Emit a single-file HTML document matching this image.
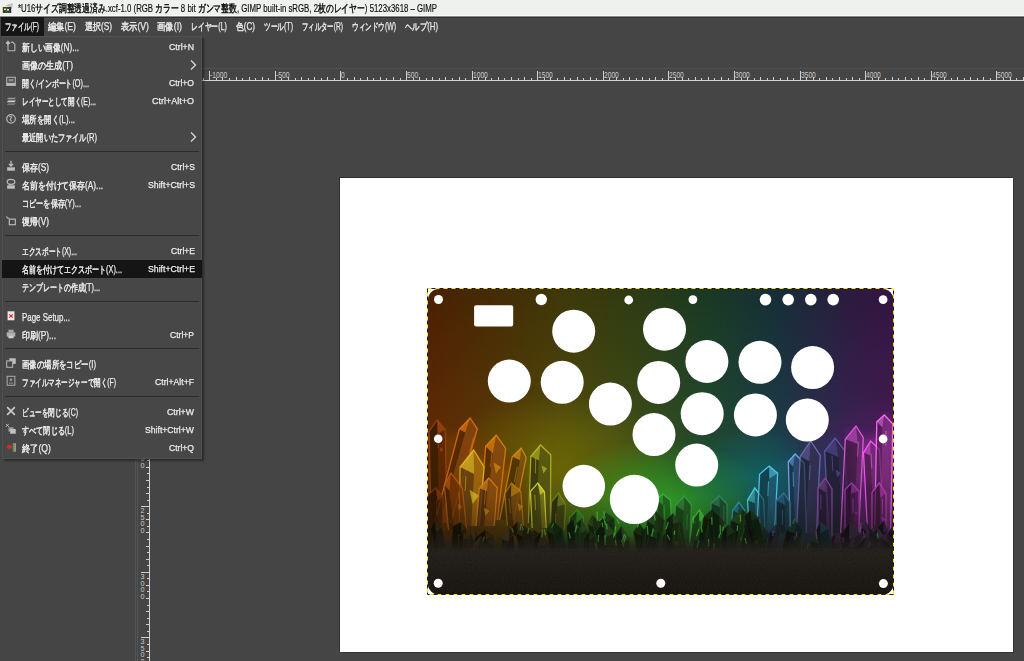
<!DOCTYPE html>
<html><head><meta charset="utf-8">
<style>
*{margin:0;padding:0;box-sizing:border-box}
html,body{width:1024px;height:661px;overflow:hidden;background:#454545;font-family:"Liberation Sans",sans-serif;position:relative}
.abs{position:absolute}
.f{position:absolute;display:inline-block;white-space:nowrap;transform-origin:0 50%}
#title{left:0;top:0;width:1024px;height:16px;background:#eef1ee;color:#111;font-size:11px;line-height:17px;-webkit-text-stroke:0.2px #111;border-bottom:1px solid #fafafa}
#menubar{left:0;top:17px;width:1024px;height:19px;background:#454545;color:#e8e8e8;font-size:9.5px;-webkit-text-stroke:0.25px #e8e8e8;line-height:19px}
#menubar .sel{background:#161616;left:1px;top:0;width:43px;height:19px}
#hruler{left:150px;top:68px;width:874px;height:13px;border-top:1px solid #505050}
#vruler{left:137px;top:81px;width:13px;height:580px;border-left:1px solid #545454}
#dockline{left:135px;top:36px;width:1px;height:625px;background:#535353}
#paper{left:340px;top:178px;width:673px;height:474px;background:#fff;box-shadow:-1px -1px 0 #2f2f2f, 1px 1px 0 #333}
#img{left:427px;top:288px;width:467px;height:307px}
#menu{left:2px;top:36px;width:200px;height:423px;background:#474747;color:#ececec;font-size:9.5px;-webkit-text-stroke:0.25px #ececec;box-shadow:inset 0 0 0 1px #505050, 2px 2px 2px rgba(0,0,0,0.4)}
.it{position:absolute;left:0;width:200px;height:18px;line-height:18px}
.it .f{top:0}
.it.hl{background:#151515}
.f i{font-style:normal;font-size:10.5px}
.f u{text-decoration:none;-webkit-text-stroke-width:0.45px}
.sep{position:absolute;left:3px;width:194px;height:1px;background:#2b2b2b}
.ic{position:absolute;left:4px;top:3px;width:12px;height:12px}
</style></head><body>
<div id="title" class="abs">
<svg class="abs" style="left:0;top:0" width="16" height="16"><defs><linearGradient id="tig" x1="0" x2="1"><stop offset="0" stop-color="#5a2a04"/><stop offset="0.5" stop-color="#2a6a20"/><stop offset="1" stop-color="#3a1a50"/></linearGradient></defs><path d="M5 6 L9 4 L13 3 L12 9 L9 7 Z" fill="#b8b8b8" opacity="0.8"/><rect x="2.8" y="7" width="8.4" height="6" fill="url(#tig)"/><rect x="4" y="8.5" width="2" height="1.5" fill="#ddd"/><rect x="7" y="9" width="2" height="1.5" fill="#eee"/></svg>
<span class="f" style="left:18px;top:0;--w:419">*U16<u>サイズ調整透過済み</u>.xcf-1.0 (RGB <u>カラー</u> 8 bit <u>ガンマ整数</u>, GIMP built-in sRGB, 2<u>枚のレイヤー</u>) 5123x3618 – GIMP</span></div>
<div id="menubar" class="abs">
<div class="abs sel"></div>
<span class="f" style="left:5px;--w:34"><u>ファイル</u><i>(F)</i></span>
<span class="f" style="left:48px;--w:28"><u>編集</u><i>(E)</i></span>
<span class="f" style="left:85px;--w:27"><u>選択</u><i>(S)</i></span>
<span class="f" style="left:121px;--w:28"><u>表示</u><i>(V)</i></span>
<span class="f" style="left:157px;--w:25"><u>画像</u><i>(I)</i></span>
<span class="f" style="left:191px;--w:36"><u>レイヤー</u><i>(L)</i></span>
<span class="f" style="left:236px;--w:19"><u>色</u><i>(C)</i></span>
<span class="f" style="left:264px;--w:29"><u>ツール</u><i>(T)</i></span>
<span class="f" style="left:302px;--w:41"><u>フィルター</u><i>(R)</i></span>
<span class="f" style="left:352px;--w:44"><u>ウィンドウ</u><i>(W)</i></span>
<span class="f" style="left:405px;--w:33"><u>ヘルプ</u><i>(H)</i></span>
</div>
<div class="abs" style="left:0;top:16px;width:1024px;height:1px;background:#8c8c8c"></div>
<div class="abs" style="left:44px;top:17px;width:980px;height:1px;background:#2e2e2e"></div>
<div class="abs" style="left:44px;top:18px;width:980px;height:1px;background:#4a4a4a"></div>
<div id="hruler" class="abs"><svg width="874" height="13" style="position:absolute;left:0;top:0">
<rect x="0" y="11" width="874" height="1" fill="#d4d4d4"/>
<rect x="0" y="9" width="1" height="2" fill="#cfcfcf"/>
<rect x="7" y="8" width="1" height="3" fill="#cfcfcf"/>
<rect x="13" y="9" width="1" height="2" fill="#cfcfcf"/>
<rect x="20" y="8" width="1" height="3" fill="#cfcfcf"/>
<rect x="26" y="9" width="1" height="2" fill="#cfcfcf"/>
<rect x="33" y="8" width="1" height="3" fill="#cfcfcf"/>
<rect x="40" y="9" width="1" height="2" fill="#cfcfcf"/>
<rect x="46" y="8" width="1" height="3" fill="#cfcfcf"/>
<rect x="53" y="9" width="1" height="2" fill="#cfcfcf"/>
<rect x="59" y="2" width="1" height="9" fill="#cfcfcf"/>
<text x="60" y="8.6" font-size="8.2" fill="#cccccc" font-family="Liberation Sans" textLength="17.3" lengthAdjust="spacingAndGlyphs">-1000</text>
<rect x="66" y="9" width="1" height="2" fill="#cfcfcf"/>
<rect x="72" y="8" width="1" height="3" fill="#cfcfcf"/>
<rect x="79" y="9" width="1" height="2" fill="#cfcfcf"/>
<rect x="86" y="8" width="1" height="3" fill="#cfcfcf"/>
<rect x="92" y="9" width="1" height="2" fill="#cfcfcf"/>
<rect x="99" y="8" width="1" height="3" fill="#cfcfcf"/>
<rect x="105" y="9" width="1" height="2" fill="#cfcfcf"/>
<rect x="112" y="8" width="1" height="3" fill="#cfcfcf"/>
<rect x="118" y="9" width="1" height="2" fill="#cfcfcf"/>
<rect x="125" y="2" width="1" height="9" fill="#cfcfcf"/>
<text x="126" y="8.6" font-size="8.2" fill="#cccccc" font-family="Liberation Sans" textLength="13.6" lengthAdjust="spacingAndGlyphs">-500</text>
<rect x="131" y="9" width="1" height="2" fill="#cfcfcf"/>
<rect x="138" y="8" width="1" height="3" fill="#cfcfcf"/>
<rect x="145" y="9" width="1" height="2" fill="#cfcfcf"/>
<rect x="151" y="8" width="1" height="3" fill="#cfcfcf"/>
<rect x="158" y="9" width="1" height="2" fill="#cfcfcf"/>
<rect x="164" y="8" width="1" height="3" fill="#cfcfcf"/>
<rect x="171" y="9" width="1" height="2" fill="#cfcfcf"/>
<rect x="177" y="8" width="1" height="3" fill="#cfcfcf"/>
<rect x="184" y="9" width="1" height="2" fill="#cfcfcf"/>
<rect x="190" y="2" width="1" height="9" fill="#cfcfcf"/>
<text x="191" y="8.6" font-size="8.2" fill="#cccccc" font-family="Liberation Sans" textLength="3.7" lengthAdjust="spacingAndGlyphs">0</text>
<rect x="197" y="9" width="1" height="2" fill="#cfcfcf"/>
<rect x="204" y="8" width="1" height="3" fill="#cfcfcf"/>
<rect x="210" y="9" width="1" height="2" fill="#cfcfcf"/>
<rect x="217" y="8" width="1" height="3" fill="#cfcfcf"/>
<rect x="223" y="9" width="1" height="2" fill="#cfcfcf"/>
<rect x="230" y="8" width="1" height="3" fill="#cfcfcf"/>
<rect x="236" y="9" width="1" height="2" fill="#cfcfcf"/>
<rect x="243" y="8" width="1" height="3" fill="#cfcfcf"/>
<rect x="250" y="9" width="1" height="2" fill="#cfcfcf"/>
<rect x="256" y="2" width="1" height="9" fill="#cfcfcf"/>
<text x="257" y="8.6" font-size="8.2" fill="#cccccc" font-family="Liberation Sans" textLength="11.1" lengthAdjust="spacingAndGlyphs">500</text>
<rect x="263" y="9" width="1" height="2" fill="#cfcfcf"/>
<rect x="269" y="8" width="1" height="3" fill="#cfcfcf"/>
<rect x="276" y="9" width="1" height="2" fill="#cfcfcf"/>
<rect x="282" y="8" width="1" height="3" fill="#cfcfcf"/>
<rect x="289" y="9" width="1" height="2" fill="#cfcfcf"/>
<rect x="295" y="8" width="1" height="3" fill="#cfcfcf"/>
<rect x="302" y="9" width="1" height="2" fill="#cfcfcf"/>
<rect x="309" y="8" width="1" height="3" fill="#cfcfcf"/>
<rect x="315" y="9" width="1" height="2" fill="#cfcfcf"/>
<rect x="322" y="2" width="1" height="9" fill="#cfcfcf"/>
<text x="323" y="8.6" font-size="8.2" fill="#cccccc" font-family="Liberation Sans" textLength="14.8" lengthAdjust="spacingAndGlyphs">1000</text>
<rect x="328" y="9" width="1" height="2" fill="#cfcfcf"/>
<rect x="335" y="8" width="1" height="3" fill="#cfcfcf"/>
<rect x="341" y="9" width="1" height="2" fill="#cfcfcf"/>
<rect x="348" y="8" width="1" height="3" fill="#cfcfcf"/>
<rect x="354" y="9" width="1" height="2" fill="#cfcfcf"/>
<rect x="361" y="8" width="1" height="3" fill="#cfcfcf"/>
<rect x="368" y="9" width="1" height="2" fill="#cfcfcf"/>
<rect x="374" y="8" width="1" height="3" fill="#cfcfcf"/>
<rect x="381" y="9" width="1" height="2" fill="#cfcfcf"/>
<rect x="387" y="2" width="1" height="9" fill="#cfcfcf"/>
<text x="388" y="8.6" font-size="8.2" fill="#cccccc" font-family="Liberation Sans" textLength="14.8" lengthAdjust="spacingAndGlyphs">1500</text>
<rect x="394" y="9" width="1" height="2" fill="#cfcfcf"/>
<rect x="400" y="8" width="1" height="3" fill="#cfcfcf"/>
<rect x="407" y="9" width="1" height="2" fill="#cfcfcf"/>
<rect x="414" y="8" width="1" height="3" fill="#cfcfcf"/>
<rect x="420" y="9" width="1" height="2" fill="#cfcfcf"/>
<rect x="427" y="8" width="1" height="3" fill="#cfcfcf"/>
<rect x="433" y="9" width="1" height="2" fill="#cfcfcf"/>
<rect x="440" y="8" width="1" height="3" fill="#cfcfcf"/>
<rect x="446" y="9" width="1" height="2" fill="#cfcfcf"/>
<rect x="453" y="2" width="1" height="9" fill="#cfcfcf"/>
<text x="454" y="8.6" font-size="8.2" fill="#cccccc" font-family="Liberation Sans" textLength="14.8" lengthAdjust="spacingAndGlyphs">2000</text>
<rect x="459" y="9" width="1" height="2" fill="#cfcfcf"/>
<rect x="466" y="8" width="1" height="3" fill="#cfcfcf"/>
<rect x="473" y="9" width="1" height="2" fill="#cfcfcf"/>
<rect x="479" y="8" width="1" height="3" fill="#cfcfcf"/>
<rect x="486" y="9" width="1" height="2" fill="#cfcfcf"/>
<rect x="492" y="8" width="1" height="3" fill="#cfcfcf"/>
<rect x="499" y="9" width="1" height="2" fill="#cfcfcf"/>
<rect x="505" y="8" width="1" height="3" fill="#cfcfcf"/>
<rect x="512" y="9" width="1" height="2" fill="#cfcfcf"/>
<rect x="518" y="2" width="1" height="9" fill="#cfcfcf"/>
<text x="519" y="8.6" font-size="8.2" fill="#cccccc" font-family="Liberation Sans" textLength="14.8" lengthAdjust="spacingAndGlyphs">2500</text>
<rect x="525" y="9" width="1" height="2" fill="#cfcfcf"/>
<rect x="532" y="8" width="1" height="3" fill="#cfcfcf"/>
<rect x="538" y="9" width="1" height="2" fill="#cfcfcf"/>
<rect x="545" y="8" width="1" height="3" fill="#cfcfcf"/>
<rect x="551" y="9" width="1" height="2" fill="#cfcfcf"/>
<rect x="558" y="8" width="1" height="3" fill="#cfcfcf"/>
<rect x="564" y="9" width="1" height="2" fill="#cfcfcf"/>
<rect x="571" y="8" width="1" height="3" fill="#cfcfcf"/>
<rect x="578" y="9" width="1" height="2" fill="#cfcfcf"/>
<rect x="584" y="2" width="1" height="9" fill="#cfcfcf"/>
<text x="585" y="8.6" font-size="8.2" fill="#cccccc" font-family="Liberation Sans" textLength="14.8" lengthAdjust="spacingAndGlyphs">3000</text>
<rect x="591" y="9" width="1" height="2" fill="#cfcfcf"/>
<rect x="597" y="8" width="1" height="3" fill="#cfcfcf"/>
<rect x="604" y="9" width="1" height="2" fill="#cfcfcf"/>
<rect x="610" y="8" width="1" height="3" fill="#cfcfcf"/>
<rect x="617" y="9" width="1" height="2" fill="#cfcfcf"/>
<rect x="623" y="8" width="1" height="3" fill="#cfcfcf"/>
<rect x="630" y="9" width="1" height="2" fill="#cfcfcf"/>
<rect x="637" y="8" width="1" height="3" fill="#cfcfcf"/>
<rect x="643" y="9" width="1" height="2" fill="#cfcfcf"/>
<rect x="650" y="2" width="1" height="9" fill="#cfcfcf"/>
<text x="651" y="8.6" font-size="8.2" fill="#cccccc" font-family="Liberation Sans" textLength="14.8" lengthAdjust="spacingAndGlyphs">3500</text>
<rect x="656" y="9" width="1" height="2" fill="#cfcfcf"/>
<rect x="663" y="8" width="1" height="3" fill="#cfcfcf"/>
<rect x="669" y="9" width="1" height="2" fill="#cfcfcf"/>
<rect x="676" y="8" width="1" height="3" fill="#cfcfcf"/>
<rect x="682" y="9" width="1" height="2" fill="#cfcfcf"/>
<rect x="689" y="8" width="1" height="3" fill="#cfcfcf"/>
<rect x="696" y="9" width="1" height="2" fill="#cfcfcf"/>
<rect x="702" y="8" width="1" height="3" fill="#cfcfcf"/>
<rect x="709" y="9" width="1" height="2" fill="#cfcfcf"/>
<rect x="715" y="2" width="1" height="9" fill="#cfcfcf"/>
<text x="716" y="8.6" font-size="8.2" fill="#cccccc" font-family="Liberation Sans" textLength="14.8" lengthAdjust="spacingAndGlyphs">4000</text>
<rect x="722" y="9" width="1" height="2" fill="#cfcfcf"/>
<rect x="728" y="8" width="1" height="3" fill="#cfcfcf"/>
<rect x="735" y="9" width="1" height="2" fill="#cfcfcf"/>
<rect x="742" y="8" width="1" height="3" fill="#cfcfcf"/>
<rect x="748" y="9" width="1" height="2" fill="#cfcfcf"/>
<rect x="755" y="8" width="1" height="3" fill="#cfcfcf"/>
<rect x="761" y="9" width="1" height="2" fill="#cfcfcf"/>
<rect x="768" y="8" width="1" height="3" fill="#cfcfcf"/>
<rect x="774" y="9" width="1" height="2" fill="#cfcfcf"/>
<rect x="781" y="2" width="1" height="9" fill="#cfcfcf"/>
<text x="782" y="8.6" font-size="8.2" fill="#cccccc" font-family="Liberation Sans" textLength="14.8" lengthAdjust="spacingAndGlyphs">4500</text>
<rect x="787" y="9" width="1" height="2" fill="#cfcfcf"/>
<rect x="794" y="8" width="1" height="3" fill="#cfcfcf"/>
<rect x="801" y="9" width="1" height="2" fill="#cfcfcf"/>
<rect x="807" y="8" width="1" height="3" fill="#cfcfcf"/>
<rect x="814" y="9" width="1" height="2" fill="#cfcfcf"/>
<rect x="820" y="8" width="1" height="3" fill="#cfcfcf"/>
<rect x="827" y="9" width="1" height="2" fill="#cfcfcf"/>
<rect x="833" y="8" width="1" height="3" fill="#cfcfcf"/>
<rect x="840" y="9" width="1" height="2" fill="#cfcfcf"/>
<rect x="846" y="2" width="1" height="9" fill="#cfcfcf"/>
<text x="847" y="8.6" font-size="8.2" fill="#cccccc" font-family="Liberation Sans" textLength="14.8" lengthAdjust="spacingAndGlyphs">5000</text>
<rect x="853" y="9" width="1" height="2" fill="#cfcfcf"/>
<rect x="860" y="8" width="1" height="3" fill="#cfcfcf"/>
<rect x="866" y="9" width="1" height="2" fill="#cfcfcf"/>
<rect x="873" y="8" width="1" height="3" fill="#cfcfcf"/>
</svg></div>
<div id="dockline" class="abs"></div>
<div id="vruler" class="abs"><svg width="13" height="580" style="position:absolute;left:0;top:0">
<rect x="11" y="0" width="1" height="580" fill="#d4d4d4"/>
<rect x="8" y="5" width="3" height="1" fill="#cfcfcf"/>
<rect x="9" y="12" width="2" height="1" fill="#cfcfcf"/>
<rect x="8" y="18" width="3" height="1" fill="#cfcfcf"/>
<rect x="9" y="25" width="2" height="1" fill="#cfcfcf"/>
<rect x="3" y="32" width="8" height="1" fill="#cfcfcf"/>
<text x="2.6" y="39.0" font-size="8" fill="#cccccc" font-family="Liberation Sans" textLength="4" lengthAdjust="spacingAndGlyphs">-</text>
<text x="2.6" y="45.5" font-size="8" fill="#cccccc" font-family="Liberation Sans" textLength="4" lengthAdjust="spacingAndGlyphs">5</text>
<text x="2.6" y="52.0" font-size="8" fill="#cccccc" font-family="Liberation Sans" textLength="4" lengthAdjust="spacingAndGlyphs">0</text>
<text x="2.6" y="58.5" font-size="8" fill="#cccccc" font-family="Liberation Sans" textLength="4" lengthAdjust="spacingAndGlyphs">0</text>
<rect x="9" y="38" width="2" height="1" fill="#cfcfcf"/>
<rect x="8" y="45" width="3" height="1" fill="#cfcfcf"/>
<rect x="9" y="51" width="2" height="1" fill="#cfcfcf"/>
<rect x="8" y="58" width="3" height="1" fill="#cfcfcf"/>
<rect x="9" y="64" width="2" height="1" fill="#cfcfcf"/>
<rect x="8" y="71" width="3" height="1" fill="#cfcfcf"/>
<rect x="9" y="78" width="2" height="1" fill="#cfcfcf"/>
<rect x="8" y="84" width="3" height="1" fill="#cfcfcf"/>
<rect x="9" y="91" width="2" height="1" fill="#cfcfcf"/>
<rect x="3" y="97" width="8" height="1" fill="#cfcfcf"/>
<text x="2.6" y="104.0" font-size="8" fill="#cccccc" font-family="Liberation Sans" textLength="4" lengthAdjust="spacingAndGlyphs">0</text>
<rect x="9" y="104" width="2" height="1" fill="#cfcfcf"/>
<rect x="8" y="110" width="3" height="1" fill="#cfcfcf"/>
<rect x="9" y="117" width="2" height="1" fill="#cfcfcf"/>
<rect x="8" y="123" width="3" height="1" fill="#cfcfcf"/>
<rect x="9" y="130" width="2" height="1" fill="#cfcfcf"/>
<rect x="8" y="137" width="3" height="1" fill="#cfcfcf"/>
<rect x="9" y="143" width="2" height="1" fill="#cfcfcf"/>
<rect x="8" y="150" width="3" height="1" fill="#cfcfcf"/>
<rect x="9" y="156" width="2" height="1" fill="#cfcfcf"/>
<rect x="3" y="163" width="8" height="1" fill="#cfcfcf"/>
<text x="2.6" y="170.0" font-size="8" fill="#cccccc" font-family="Liberation Sans" textLength="4" lengthAdjust="spacingAndGlyphs">5</text>
<text x="2.6" y="176.5" font-size="8" fill="#cccccc" font-family="Liberation Sans" textLength="4" lengthAdjust="spacingAndGlyphs">0</text>
<text x="2.6" y="183.0" font-size="8" fill="#cccccc" font-family="Liberation Sans" textLength="4" lengthAdjust="spacingAndGlyphs">0</text>
<rect x="9" y="169" width="2" height="1" fill="#cfcfcf"/>
<rect x="8" y="176" width="3" height="1" fill="#cfcfcf"/>
<rect x="9" y="182" width="2" height="1" fill="#cfcfcf"/>
<rect x="8" y="189" width="3" height="1" fill="#cfcfcf"/>
<rect x="9" y="196" width="2" height="1" fill="#cfcfcf"/>
<rect x="8" y="202" width="3" height="1" fill="#cfcfcf"/>
<rect x="9" y="209" width="2" height="1" fill="#cfcfcf"/>
<rect x="8" y="215" width="3" height="1" fill="#cfcfcf"/>
<rect x="9" y="222" width="2" height="1" fill="#cfcfcf"/>
<rect x="3" y="228" width="8" height="1" fill="#cfcfcf"/>
<text x="2.6" y="235.0" font-size="8" fill="#cccccc" font-family="Liberation Sans" textLength="4" lengthAdjust="spacingAndGlyphs">1</text>
<text x="2.6" y="241.5" font-size="8" fill="#cccccc" font-family="Liberation Sans" textLength="4" lengthAdjust="spacingAndGlyphs">0</text>
<text x="2.6" y="248.0" font-size="8" fill="#cccccc" font-family="Liberation Sans" textLength="4" lengthAdjust="spacingAndGlyphs">0</text>
<text x="2.6" y="254.5" font-size="8" fill="#cccccc" font-family="Liberation Sans" textLength="4" lengthAdjust="spacingAndGlyphs">0</text>
<rect x="9" y="235" width="2" height="1" fill="#cfcfcf"/>
<rect x="8" y="242" width="3" height="1" fill="#cfcfcf"/>
<rect x="9" y="248" width="2" height="1" fill="#cfcfcf"/>
<rect x="8" y="255" width="3" height="1" fill="#cfcfcf"/>
<rect x="9" y="261" width="2" height="1" fill="#cfcfcf"/>
<rect x="8" y="268" width="3" height="1" fill="#cfcfcf"/>
<rect x="9" y="274" width="2" height="1" fill="#cfcfcf"/>
<rect x="8" y="281" width="3" height="1" fill="#cfcfcf"/>
<rect x="9" y="287" width="2" height="1" fill="#cfcfcf"/>
<rect x="3" y="294" width="8" height="1" fill="#cfcfcf"/>
<text x="2.6" y="301.0" font-size="8" fill="#cccccc" font-family="Liberation Sans" textLength="4" lengthAdjust="spacingAndGlyphs">1</text>
<text x="2.6" y="307.5" font-size="8" fill="#cccccc" font-family="Liberation Sans" textLength="4" lengthAdjust="spacingAndGlyphs">5</text>
<text x="2.6" y="314.0" font-size="8" fill="#cccccc" font-family="Liberation Sans" textLength="4" lengthAdjust="spacingAndGlyphs">0</text>
<text x="2.6" y="320.5" font-size="8" fill="#cccccc" font-family="Liberation Sans" textLength="4" lengthAdjust="spacingAndGlyphs">0</text>
<rect x="9" y="301" width="2" height="1" fill="#cfcfcf"/>
<rect x="8" y="307" width="3" height="1" fill="#cfcfcf"/>
<rect x="9" y="314" width="2" height="1" fill="#cfcfcf"/>
<rect x="8" y="320" width="3" height="1" fill="#cfcfcf"/>
<rect x="9" y="327" width="2" height="1" fill="#cfcfcf"/>
<rect x="8" y="333" width="3" height="1" fill="#cfcfcf"/>
<rect x="9" y="340" width="2" height="1" fill="#cfcfcf"/>
<rect x="8" y="346" width="3" height="1" fill="#cfcfcf"/>
<rect x="9" y="353" width="2" height="1" fill="#cfcfcf"/>
<rect x="3" y="360" width="8" height="1" fill="#cfcfcf"/>
<text x="2.6" y="367.0" font-size="8" fill="#cccccc" font-family="Liberation Sans" textLength="4" lengthAdjust="spacingAndGlyphs">2</text>
<text x="2.6" y="373.5" font-size="8" fill="#cccccc" font-family="Liberation Sans" textLength="4" lengthAdjust="spacingAndGlyphs">0</text>
<text x="2.6" y="380.0" font-size="8" fill="#cccccc" font-family="Liberation Sans" textLength="4" lengthAdjust="spacingAndGlyphs">0</text>
<text x="2.6" y="386.5" font-size="8" fill="#cccccc" font-family="Liberation Sans" textLength="4" lengthAdjust="spacingAndGlyphs">0</text>
<rect x="9" y="366" width="2" height="1" fill="#cfcfcf"/>
<rect x="8" y="373" width="3" height="1" fill="#cfcfcf"/>
<rect x="9" y="379" width="2" height="1" fill="#cfcfcf"/>
<rect x="8" y="386" width="3" height="1" fill="#cfcfcf"/>
<rect x="9" y="392" width="2" height="1" fill="#cfcfcf"/>
<rect x="8" y="399" width="3" height="1" fill="#cfcfcf"/>
<rect x="9" y="406" width="2" height="1" fill="#cfcfcf"/>
<rect x="8" y="412" width="3" height="1" fill="#cfcfcf"/>
<rect x="9" y="419" width="2" height="1" fill="#cfcfcf"/>
<rect x="3" y="425" width="8" height="1" fill="#cfcfcf"/>
<text x="2.6" y="432.0" font-size="8" fill="#cccccc" font-family="Liberation Sans" textLength="4" lengthAdjust="spacingAndGlyphs">2</text>
<text x="2.6" y="438.5" font-size="8" fill="#cccccc" font-family="Liberation Sans" textLength="4" lengthAdjust="spacingAndGlyphs">5</text>
<text x="2.6" y="445.0" font-size="8" fill="#cccccc" font-family="Liberation Sans" textLength="4" lengthAdjust="spacingAndGlyphs">0</text>
<text x="2.6" y="451.5" font-size="8" fill="#cccccc" font-family="Liberation Sans" textLength="4" lengthAdjust="spacingAndGlyphs">0</text>
<rect x="9" y="432" width="2" height="1" fill="#cfcfcf"/>
<rect x="8" y="438" width="3" height="1" fill="#cfcfcf"/>
<rect x="9" y="445" width="2" height="1" fill="#cfcfcf"/>
<rect x="8" y="451" width="3" height="1" fill="#cfcfcf"/>
<rect x="9" y="458" width="2" height="1" fill="#cfcfcf"/>
<rect x="8" y="465" width="3" height="1" fill="#cfcfcf"/>
<rect x="9" y="471" width="2" height="1" fill="#cfcfcf"/>
<rect x="8" y="478" width="3" height="1" fill="#cfcfcf"/>
<rect x="9" y="484" width="2" height="1" fill="#cfcfcf"/>
<rect x="3" y="491" width="8" height="1" fill="#cfcfcf"/>
<text x="2.6" y="498.0" font-size="8" fill="#cccccc" font-family="Liberation Sans" textLength="4" lengthAdjust="spacingAndGlyphs">3</text>
<text x="2.6" y="504.5" font-size="8" fill="#cccccc" font-family="Liberation Sans" textLength="4" lengthAdjust="spacingAndGlyphs">0</text>
<text x="2.6" y="511.0" font-size="8" fill="#cccccc" font-family="Liberation Sans" textLength="4" lengthAdjust="spacingAndGlyphs">0</text>
<text x="2.6" y="517.5" font-size="8" fill="#cccccc" font-family="Liberation Sans" textLength="4" lengthAdjust="spacingAndGlyphs">0</text>
<rect x="9" y="497" width="2" height="1" fill="#cfcfcf"/>
<rect x="8" y="504" width="3" height="1" fill="#cfcfcf"/>
<rect x="9" y="510" width="2" height="1" fill="#cfcfcf"/>
<rect x="8" y="517" width="3" height="1" fill="#cfcfcf"/>
<rect x="9" y="524" width="2" height="1" fill="#cfcfcf"/>
<rect x="8" y="530" width="3" height="1" fill="#cfcfcf"/>
<rect x="9" y="537" width="2" height="1" fill="#cfcfcf"/>
<rect x="8" y="543" width="3" height="1" fill="#cfcfcf"/>
<rect x="9" y="550" width="2" height="1" fill="#cfcfcf"/>
<rect x="3" y="556" width="8" height="1" fill="#cfcfcf"/>
<text x="2.6" y="563.0" font-size="8" fill="#cccccc" font-family="Liberation Sans" textLength="4" lengthAdjust="spacingAndGlyphs">3</text>
<text x="2.6" y="569.5" font-size="8" fill="#cccccc" font-family="Liberation Sans" textLength="4" lengthAdjust="spacingAndGlyphs">5</text>
<text x="2.6" y="576.0" font-size="8" fill="#cccccc" font-family="Liberation Sans" textLength="4" lengthAdjust="spacingAndGlyphs">0</text>
<text x="2.6" y="582.5" font-size="8" fill="#cccccc" font-family="Liberation Sans" textLength="4" lengthAdjust="spacingAndGlyphs">0</text>
<rect x="9" y="563" width="2" height="1" fill="#cfcfcf"/>
<rect x="8" y="570" width="3" height="1" fill="#cfcfcf"/>
<rect x="9" y="576" width="2" height="1" fill="#cfcfcf"/>
</svg></div>
<div id="paper" class="abs"></div>
<svg id="img" class="abs" width="467" height="307" viewBox="0 0 467 307">
<defs>
<linearGradient id="bg" x1="0" y1="0" x2="1" y2="0">
<stop offset="0" stop-color="#5e2804"/>
<stop offset="0.15" stop-color="#563806"/>
<stop offset="0.3" stop-color="#4e480c"/>
<stop offset="0.45" stop-color="#3a4a18"/>
<stop offset="0.6" stop-color="#20482c"/>
<stop offset="0.75" stop-color="#1c3a46"/>
<stop offset="0.9" stop-color="#36224e"/>
<stop offset="1" stop-color="#421a50"/>
</linearGradient>
<linearGradient id="topdark" x1="0" y1="0" x2="0" y2="1">
<stop offset="0" stop-color="#000" stop-opacity="0.22"/>
<stop offset="0.45" stop-color="#000" stop-opacity="0"/>
</linearGradient>
<radialGradient id="g1" cx="0.28" cy="0.6" r="0.26">
<stop offset="0" stop-color="#8a8a00" stop-opacity="0.55"/>
<stop offset="1" stop-color="#8a8a00" stop-opacity="0"/>
</radialGradient>
<radialGradient id="g2" cx="0.5" cy="0.74" r="0.25">
<stop offset="0" stop-color="#38d030" stop-opacity="0.95"/>
<stop offset="0.5" stop-color="#30c028" stop-opacity="0.5"/>
<stop offset="1" stop-color="#30b828" stop-opacity="0"/>
</radialGradient>
<radialGradient id="g3" cx="0.71" cy="0.62" r="0.17">
<stop offset="0" stop-color="#089090" stop-opacity="0.5"/>
<stop offset="1" stop-color="#089090" stop-opacity="0"/>
</radialGradient>
<radialGradient id="g4" cx="1.0" cy="0.55" r="0.2">
<stop offset="0" stop-color="#a020a0" stop-opacity="0.2"/>
<stop offset="1" stop-color="#a020a0" stop-opacity="0"/>
</radialGradient>
<linearGradient id="ground" x1="0" y1="0" x2="0" y2="1">
<stop offset="0" stop-color="#211f19" stop-opacity="0"/>
<stop offset="0.28" stop-color="#221f1a" stop-opacity="1"/>
<stop offset="1" stop-color="#17130f"/>
</linearGradient>
<linearGradient id="lowdark" x1="0" y1="0" x2="0" y2="1">
<stop offset="0" stop-color="#15150f" stop-opacity="0"/>
<stop offset="0.5" stop-color="#15150f" stop-opacity="0.15"/>
<stop offset="1" stop-color="#15150f" stop-opacity="0.7"/>
</linearGradient>
<filter id="blur3" x="-20%" y="-20%" width="140%" height="140%"><feGaussianBlur stdDeviation="4"/></filter>
<filter id="noise" x="0" y="0" width="100%" height="100%"><feTurbulence type="fractalNoise" baseFrequency="0.9" numOctaves="1" seed="4"/><feColorMatrix type="matrix" values="0 0 0 0 0.2  0 0 0 0 0.19  0 0 0 0 0.16  0 0 0 -1.6 1.1"/></filter>
<filter id="soft" x="-5%" y="-5%" width="110%" height="110%"><feGaussianBlur stdDeviation="0.6"/></filter><filter id="soft2" x="-5%" y="-5%" width="110%" height="110%"><feGaussianBlur stdDeviation="0.6"/></filter>
<clipPath id="clip"><rect x="1" y="1" width="465.5" height="305.5" rx="11"/></clipPath>
</defs>
<g clip-path="url(#clip)">
<rect width="467" height="307" fill="url(#bg)"/>
<rect width="467" height="307" fill="url(#topdark)"/>
<rect width="467" height="307" fill="url(#g1)"/>
<rect width="467" height="307" fill="url(#g2)"/>
<rect width="467" height="307" fill="url(#g3)"/>
<rect width="467" height="307" fill="url(#g4)"/>
<polygon points="0.0,150.0 20.0,145.0 45.0,150.0 70.0,162.0 95.0,172.0 100.0,230.0 0.0,240.0" fill="#7a3a08" fill-opacity="0.65" filter="url(#blur3)"/>
<polygon points="35.0,172.0 60.0,172.0 85.0,185.0 80.0,210.0 40.0,215.0" fill="#b86810" fill-opacity="0.40" filter="url(#blur3)"/>
<polygon points="105.0,160.0 120.0,155.0 130.0,200.0 132.0,230.0 100.0,230.0" fill="#6a6a14" fill-opacity="0.50" filter="url(#blur3)"/>
<polygon points="320.0,200.0 345.0,178.0 372.0,165.0 380.0,235.0 320.0,235.0" fill="#1a5a70" fill-opacity="0.45" filter="url(#blur3)"/>
<polygon points="378.0,152.0 410.0,148.0 420.0,238.0 375.0,238.0" fill="#303060" fill-opacity="0.50" filter="url(#blur3)"/>
<polygon points="420.0,138.0 445.0,150.0 458.0,125.0 466.0,125.0 466.0,250.0 420.0,250.0" fill="#6a2070" fill-opacity="0.60" filter="url(#blur3)"/>
<polygon points="428.0,155.0 452.0,150.0 466.0,130.0 466.0,195.0 430.0,195.0" fill="#a030a0" fill-opacity="0.45" filter="url(#blur3)"/>
<g filter="url(#soft)">
<polygon points="10.1,132.0 2.2,143.4 4.2,240.0 12.5,240.0 10.6,145.7" fill="#361704" fill-opacity="0.80"/>
<polygon points="10.1,132.0 10.6,145.7 12.5,240.0 20.2,240.0 18.2,141.6" fill="#5a2706" fill-opacity="0.80"/>
<polygon points="10.1,132.0 10.6,145.7 18.2,141.6" fill="#a9490c" fill-opacity="0.64"/>
<polyline points="4.2,240.0 2.2,143.4 10.1,132.0 18.2,141.6 20.2,240.0" fill="none" stroke="#a9490c" stroke-width="1.3" stroke-opacity="0.70"/>
<line x1="11.0" y1="145.2" x2="11.3" y2="160.2" stroke="#ba500e" stroke-width="1" stroke-opacity="0.42"/>
<polygon points="12.9,159.3 16.4,161.4 13.9,164.6" fill="#c3540e" fill-opacity="0.56"/>
<polygon points="43.1,130.0 32.3,141.3 7.6,235.0 12.7,235.0 38.3,144.5" fill="#512806" fill-opacity="0.80"/>
<polygon points="43.1,130.0 38.3,144.5 12.7,235.0 23.6,235.0 50.3,140.8" fill="#88440a" fill-opacity="0.80"/>
<polygon points="43.1,130.0 32.3,141.3 38.3,144.5" fill="#ff8013" fill-opacity="0.64"/>
<polyline points="7.6,235.0 32.3,141.3 43.1,130.0 50.3,140.8 23.6,235.0" fill="none" stroke="#ff8013" stroke-width="1.3" stroke-opacity="0.70"/>
<line x1="46.5" y1="149.7" x2="42.5" y2="164.7" stroke="#ff8c15" stroke-width="1" stroke-opacity="0.42"/>
<polygon points="69.2,147.0 58.7,158.4 52.5,232.0 58.8,232.0 65.9,165.3" fill="#552d07" fill-opacity="0.80"/>
<polygon points="69.2,147.0 65.9,165.3 58.8,232.0 70.5,232.0 78.7,160.4" fill="#8e4c0b" fill-opacity="0.80"/>
<polygon points="69.2,147.0 58.7,158.4 65.9,165.3" fill="#ff9016" fill-opacity="0.64"/>
<polyline points="52.5,232.0 58.7,158.4 69.2,147.0 78.7,160.4 70.5,232.0" fill="none" stroke="#ff9016" stroke-width="1.3" stroke-opacity="0.70"/>
<line x1="65.0" y1="164.2" x2="63.5" y2="179.2" stroke="#ff9e18" stroke-width="1" stroke-opacity="0.42"/>
<polygon points="66.6,174.6 74.0,179.0 68.9,185.6" fill="#ffa519" fill-opacity="0.56"/>
<polygon points="94.2,160.0 85.2,168.8 72.6,232.0 80.4,232.0 93.0,172.3" fill="#4e3308" fill-opacity="0.80"/>
<polygon points="94.2,160.0 93.0,172.3 80.4,232.0 86.6,232.0 99.2,169.5" fill="#82550d" fill-opacity="0.80"/>
<polygon points="94.2,160.0 85.2,168.8 93.0,172.3" fill="#f6a019" fill-opacity="0.64"/>
<polyline points="72.6,232.0 85.2,168.8 94.2,160.0 99.2,169.5 86.6,232.0" fill="none" stroke="#f6a019" stroke-width="1.3" stroke-opacity="0.70"/>
<line x1="90.4" y1="178.8" x2="87.4" y2="193.8" stroke="#ffb01c" stroke-width="1" stroke-opacity="0.42"/>
<polygon points="46.6,162.0 33.1,179.1 32.2,238.0 44.2,238.0 47.1,185.9" fill="#6a450c" fill-opacity="0.80"/>
<polygon points="46.6,162.0 47.1,185.9 44.2,238.0 52.2,238.0 57.1,178.8" fill="#b07314" fill-opacity="0.80"/>
<polygon points="46.6,162.0 33.1,179.1 47.1,185.9" fill="#ffd926" fill-opacity="0.64"/>
<polyline points="32.2,238.0 33.1,179.1 46.6,162.0 57.1,178.8 52.2,238.0" fill="none" stroke="#ffd926" stroke-width="1.3" stroke-opacity="0.70"/>
<line x1="38.9" y1="188.0" x2="38.2" y2="203.0" stroke="#ffef2a" stroke-width="1" stroke-opacity="0.42"/>
<polygon points="42.6,201.8 52.0,207.4 45.5,215.9" fill="#fffa2c" fill-opacity="0.56"/>
<polygon points="23.9,185.0 17.3,197.3 21.7,242.0 27.1,242.0 22.7,202.9" fill="#462004" fill-opacity="0.80"/>
<polygon points="23.9,185.0 22.7,202.9 27.1,242.0 39.7,242.0 35.3,200.1" fill="#753606" fill-opacity="0.80"/>
<polygon points="23.9,185.0 17.3,197.3 22.7,202.9" fill="#dc660c" fill-opacity="0.64"/>
<polyline points="21.7,242.0 17.3,197.3 23.9,185.0 35.3,200.1 39.7,242.0" fill="none" stroke="#dc660c" stroke-width="1.3" stroke-opacity="0.70"/>
<line x1="31.5" y1="203.6" x2="33.0" y2="218.6" stroke="#f2700e" stroke-width="1" stroke-opacity="0.42"/>
<polygon points="30.6,216.0 35.2,218.8 32.0,222.9" fill="#fd750e" fill-opacity="0.56"/>
<polygon points="61.6,190.0 52.3,200.5 49.2,238.0 57.0,238.0 60.1,203.1" fill="#593008" fill-opacity="0.80"/>
<polygon points="61.6,190.0 60.1,203.1 57.0,238.0 67.2,238.0 70.3,199.7" fill="#95510d" fill-opacity="0.80"/>
<polygon points="61.6,190.0 52.3,200.5 60.1,203.1" fill="#ff9919" fill-opacity="0.64"/>
<polyline points="49.2,238.0 52.3,200.5 61.6,190.0 70.3,199.7 67.2,238.0" fill="none" stroke="#ff9919" stroke-width="1.3" stroke-opacity="0.70"/>
<line x1="58.6" y1="201.5" x2="57.4" y2="216.5" stroke="#ffa81c" stroke-width="1" stroke-opacity="0.42"/>
<polygon points="56.7,219.6 62.3,223.0 58.4,228.0" fill="#ffb01d" fill-opacity="0.56"/>
<polygon points="84.4,195.0 77.8,205.6 80.4,238.0 86.5,238.0 83.8,208.7" fill="#462d06" fill-opacity="0.80"/>
<polygon points="84.4,195.0 83.8,208.7 86.5,238.0 96.4,238.0 93.8,203.2" fill="#754c0a" fill-opacity="0.80"/>
<polygon points="84.4,195.0 83.8,208.7 93.8,203.2" fill="#dc9013" fill-opacity="0.64"/>
<polyline points="80.4,238.0 77.8,205.6 84.4,195.0 93.8,203.2 96.4,238.0" fill="none" stroke="#dc9013" stroke-width="1.3" stroke-opacity="0.70"/>
<line x1="82.1" y1="210.1" x2="83.3" y2="225.1" stroke="#f29e15" stroke-width="1" stroke-opacity="0.42"/>
<polygon points="90.4,215.1 96.1,218.6 92.1,223.8" fill="#fda516" fill-opacity="0.56"/>
<polygon points="8.7,200.0 0.0,207.7 0.0,245.0 10.5,245.0 10.5,212.9" fill="#2d1404" fill-opacity="0.80"/>
<polygon points="8.7,200.0 10.5,212.9 10.5,245.0 16.0,245.0 16.0,208.5" fill="#4c2206" fill-opacity="0.80"/>
<polygon points="8.7,200.0 10.5,212.9 16.0,208.5" fill="#90400c" fill-opacity="0.64"/>
<polyline points="0.0,245.0 0.0,207.7 8.7,200.0 16.0,208.5 16.0,245.0" fill="none" stroke="#90400c" stroke-width="1.3" stroke-opacity="0.70"/>
<line x1="9.4" y1="211.7" x2="9.4" y2="226.7" stroke="#9e460e" stroke-width="1" stroke-opacity="0.42"/>
<polygon points="113.4,157.0 103.8,168.6 101.4,235.0 110.5,235.0 111.9,172.5" fill="#36360b" fill-opacity="0.78"/>
<polygon points="113.4,157.0 111.9,172.5 110.5,235.0 123.4,235.0 123.8,166.8" fill="#5a5a12" fill-opacity="0.78"/>
<polygon points="113.4,157.0 103.8,168.6 111.9,172.5" fill="#c9c929" fill-opacity="0.62"/>
<polyline points="101.4,235.0 103.8,168.6 113.4,157.0 123.8,166.8 123.4,235.0" fill="none" stroke="#c9c929" stroke-width="1.3" stroke-opacity="0.80"/>
<line x1="108.7" y1="170.2" x2="108.4" y2="185.2" stroke="#dddd2d" stroke-width="1" stroke-opacity="0.48"/>
<polygon points="114.6,177.4 120.1,180.6 116.3,185.6" fill="#e7e730" fill-opacity="0.55"/>
<polygon points="110.8,195.0 103.4,203.5 105.2,240.0 114.8,240.0 113.0,207.0" fill="#515110" fill-opacity="0.78"/>
<polygon points="110.8,195.0 113.0,207.0 114.8,240.0 119.2,240.0 117.4,203.8" fill="#88881b" fill-opacity="0.78"/>
<polygon points="110.8,195.0 113.0,207.0 117.4,203.8" fill="#ffff3c" fill-opacity="0.62"/>
<polyline points="105.2,240.0 103.4,203.5 110.8,195.0 117.4,203.8 119.2,240.0" fill="none" stroke="#ffff3c" stroke-width="1.3" stroke-opacity="0.80"/>
<line x1="107.8" y1="206.8" x2="108.5" y2="221.8" stroke="#ffff42" stroke-width="1" stroke-opacity="0.48"/>
<polygon points="131.6,205.0 124.5,214.1 123.2,242.0 128.7,242.0 130.1,218.8" fill="#25280a" fill-opacity="0.78"/>
<polygon points="131.6,205.0 130.1,218.8 128.7,242.0 137.2,242.0 138.5,216.3" fill="#3e4411" fill-opacity="0.78"/>
<polygon points="131.6,205.0 130.1,218.8 138.5,216.3" fill="#8c9826" fill-opacity="0.62"/>
<polyline points="123.2,242.0 124.5,214.1 131.6,205.0 138.5,216.3 137.2,242.0" fill="none" stroke="#8c9826" stroke-width="1.3" stroke-opacity="0.80"/>
<line x1="128.9" y1="224.9" x2="128.2" y2="239.9" stroke="#9aa729" stroke-width="1" stroke-opacity="0.48"/>
<polygon points="149.9,222.0 142.5,229.7 141.3,255.0 147.9,255.0 149.1,234.8" fill="#0f2d0d" fill-opacity="0.72"/>
<polygon points="149.9,222.0 149.1,234.8 147.9,255.0 155.3,255.0 156.5,229.4" fill="#1a4c16" fill-opacity="0.72"/>
<polygon points="149.9,222.0 149.1,234.8 156.5,229.4" fill="#3eb434" fill-opacity="0.58"/>
<polyline points="141.3,255.0 142.5,229.7 149.9,222.0 156.5,229.4 155.3,255.0" fill="none" stroke="#3eb434" stroke-width="1.3" stroke-opacity="0.85"/>
<line x1="147.3" y1="238.9" x2="146.6" y2="253.9" stroke="#44c639" stroke-width="1" stroke-opacity="0.51"/>
<polygon points="149.1,252.7 152.8,254.9 150.2,258.2" fill="#47ce3b" fill-opacity="0.50"/>
<polygon points="178.4,228.0 171.4,233.4 172.3,255.0 180.6,255.0 179.6,238.7" fill="#154614" fill-opacity="0.72"/>
<polygon points="178.4,228.0 179.6,238.7 180.6,255.0 186.3,255.0 185.4,234.1" fill="#237522" fill-opacity="0.72"/>
<polygon points="178.4,228.0 179.6,238.7 185.4,234.1" fill="#54ff50" fill-opacity="0.58"/>
<polyline points="172.3,255.0 171.4,233.4 178.4,228.0 185.4,234.1 186.3,255.0" fill="none" stroke="#54ff50" stroke-width="1.3" stroke-opacity="0.85"/>
<line x1="181.3" y1="242.1" x2="182.1" y2="257.1" stroke="#5cff58" stroke-width="1" stroke-opacity="0.51"/>
<polygon points="177.5,258.5 180.3,260.2 178.3,262.8" fill="#60ff5c" fill-opacity="0.50"/>
<polygon points="235.9,206.0 229.4,211.9 231.4,255.0 238.1,255.0 236.1,217.1" fill="#113611" fill-opacity="0.72"/>
<polygon points="235.9,206.0 236.1,217.1 238.1,255.0 245.4,255.0 243.4,212.3" fill="#1c5a1c" fill-opacity="0.72"/>
<polygon points="235.9,206.0 229.4,211.9 236.1,217.1" fill="#44d444" fill-opacity="0.58"/>
<polyline points="231.4,255.0 229.4,211.9 235.9,206.0 243.4,212.3 245.4,255.0" fill="none" stroke="#44d444" stroke-width="1.3" stroke-opacity="0.85"/>
<line x1="237.0" y1="216.7" x2="237.7" y2="231.7" stroke="#4ae94a" stroke-width="1" stroke-opacity="0.51"/>
<polygon points="240.9,236.4 245.5,239.2 242.3,243.4" fill="#4ef34e" fill-opacity="0.50"/>
<polygon points="257.2,208.0 248.4,217.6 246.7,255.0 255.2,255.0 257.0,223.1" fill="#112d14" fill-opacity="0.72"/>
<polygon points="257.2,208.0 257.0,223.1 255.2,255.0 262.6,255.0 264.4,217.2" fill="#1c4c22" fill-opacity="0.72"/>
<polygon points="257.2,208.0 248.4,217.6 257.0,223.1" fill="#44b450" fill-opacity="0.58"/>
<polyline points="246.7,255.0 248.4,217.6 257.2,208.0 264.4,217.2 262.6,255.0" fill="none" stroke="#44b450" stroke-width="1.3" stroke-opacity="0.85"/>
<line x1="260.4" y1="226.7" x2="259.6" y2="241.7" stroke="#4ac658" stroke-width="1" stroke-opacity="0.51"/>
<polygon points="292.3,208.0 284.0,215.2 284.0,255.0 292.9,255.0 292.9,219.3" fill="#0f281c" fill-opacity="0.72"/>
<polygon points="292.3,208.0 292.9,219.3 292.9,255.0 300.0,255.0 300.0,216.2" fill="#19442f" fill-opacity="0.72"/>
<polygon points="292.3,208.0 284.0,215.2 292.9,219.3" fill="#3ca070" fill-opacity="0.58"/>
<polyline points="284.0,255.0 284.0,215.2 292.3,208.0 300.0,216.2 300.0,255.0" fill="none" stroke="#3ca070" stroke-width="1.3" stroke-opacity="0.85"/>
<line x1="296.8" y1="217.9" x2="296.8" y2="232.9" stroke="#42b07b" stroke-width="1" stroke-opacity="0.51"/>
<polygon points="295.2,235.1 300.8,238.4 296.9,243.4" fill="#45b880" fill-opacity="0.50"/>
<polygon points="272.4,222.0 265.2,232.0 262.7,255.0 270.1,255.0 272.6,233.4" fill="#153e12" fill-opacity="0.72"/>
<polygon points="272.4,222.0 272.6,233.4 270.1,255.0 274.7,255.0 277.2,229.8" fill="#23671e" fill-opacity="0.72"/>
<polygon points="272.4,222.0 272.6,233.4 277.2,229.8" fill="#54f448" fill-opacity="0.58"/>
<polyline points="262.7,255.0 265.2,232.0 272.4,222.0 277.2,229.8 274.7,255.0" fill="none" stroke="#54f448" stroke-width="1.3" stroke-opacity="0.85"/>
<line x1="274.1" y1="239.3" x2="272.6" y2="254.3" stroke="#5cff4f" stroke-width="1" stroke-opacity="0.51"/>
<polygon points="271.3,251.2 275.0,253.4 272.4,256.8" fill="#60ff52" fill-opacity="0.50"/>
<polygon points="311.8,214.0 305.6,222.4 304.4,245.0 309.9,245.0 311.0,225.0" fill="#0c2c35" fill-opacity="0.65"/>
<polygon points="311.8,214.0 311.0,225.0 309.9,245.0 316.4,245.0 317.6,222.5" fill="#144a58" fill-opacity="0.65"/>
<polygon points="311.8,214.0 305.6,222.4 311.0,225.0" fill="#30b0d0" fill-opacity="0.52"/>
<polyline points="304.4,245.0 305.6,222.4 311.8,214.0 317.6,222.5 316.4,245.0" fill="none" stroke="#30b0d0" stroke-width="1.3" stroke-opacity="0.95"/>
<line x1="312.6" y1="232.0" x2="311.9" y2="247.0" stroke="#34c1e4" stroke-width="1" stroke-opacity="0.57"/>
<polygon points="327.8,200.0 320.6,212.2 322.2,245.0 329.5,245.0 327.8,215.3" fill="#153d4d" fill-opacity="0.65"/>
<polygon points="327.8,200.0 327.8,215.3 329.5,245.0 338.2,245.0 336.6,211.6" fill="#236681" fill-opacity="0.65"/>
<polygon points="327.8,200.0 320.6,212.2 327.8,215.3" fill="#54f0ff" fill-opacity="0.52"/>
<polyline points="322.2,245.0 320.6,212.2 327.8,200.0 336.6,211.6 338.2,245.0" fill="none" stroke="#54f0ff" stroke-width="1.3" stroke-opacity="0.95"/>
<line x1="331.8" y1="213.9" x2="332.6" y2="228.9" stroke="#5cffff" stroke-width="1" stroke-opacity="0.57"/>
<polygon points="342.2,178.0 332.6,186.2 329.6,245.0 339.4,245.0 342.3,190.8" fill="#15394d" fill-opacity="0.65"/>
<polygon points="342.2,178.0 342.3,190.8 339.4,245.0 347.6,245.0 350.6,185.2" fill="#235f81" fill-opacity="0.65"/>
<polygon points="342.2,178.0 342.3,190.8 350.6,185.2" fill="#54e0ff" fill-opacity="0.52"/>
<polyline points="329.6,245.0 332.6,186.2 342.2,178.0 350.6,185.2 347.6,245.0" fill="none" stroke="#54e0ff" stroke-width="1.3" stroke-opacity="0.95"/>
<line x1="341.6" y1="193.2" x2="340.8" y2="208.2" stroke="#5cf6ff" stroke-width="1" stroke-opacity="0.57"/>
<polygon points="368.1,166.0 361.3,173.8 363.4,245.0 368.2,245.0 366.1,178.6" fill="#1d2d45" fill-opacity="0.65"/>
<polygon points="368.1,166.0 366.1,178.6 368.2,245.0 379.4,245.0 377.3,175.3" fill="#314c73" fill-opacity="0.65"/>
<polygon points="368.1,166.0 361.3,173.8 366.1,178.6" fill="#74b4ff" fill-opacity="0.52"/>
<polyline points="363.4,245.0 361.3,173.8 368.1,166.0 377.3,175.3 379.4,245.0" fill="none" stroke="#74b4ff" stroke-width="1.3" stroke-opacity="0.95"/>
<line x1="366.1" y1="183.9" x2="366.5" y2="198.9" stroke="#7fc6ff" stroke-width="1" stroke-opacity="0.57"/>
<polygon points="356.7,205.0 349.0,212.8 349.0,245.0 358.2,245.0 358.2,217.0" fill="#0f202c" fill-opacity="0.65"/>
<polygon points="356.7,205.0 358.2,217.0 358.2,245.0 363.0,245.0 363.0,214.1" fill="#19364a" fill-opacity="0.65"/>
<polygon points="356.7,205.0 349.0,212.8 358.2,217.0" fill="#3c80b0" fill-opacity="0.52"/>
<polyline points="349.0,245.0 349.0,212.8 356.7,205.0 363.0,214.1 363.0,245.0" fill="none" stroke="#3c80b0" stroke-width="1.3" stroke-opacity="0.95"/>
<line x1="355.4" y1="221.9" x2="355.4" y2="236.9" stroke="#428cc1" stroke-width="1" stroke-opacity="0.57"/>
<polygon points="383.7,153.0 373.2,168.5 369.4,245.0 378.5,245.0 382.3,173.2" fill="#1f1d31" fill-opacity="0.65"/>
<polygon points="383.7,153.0 382.3,173.2 378.5,245.0 389.4,245.0 393.2,167.4" fill="#343153" fill-opacity="0.65"/>
<polygon points="383.7,153.0 373.2,168.5 382.3,173.2" fill="#756eba" fill-opacity="0.52"/>
<polyline points="369.4,245.0 373.2,168.5 383.7,153.0 393.2,167.4 389.4,245.0" fill="none" stroke="#756eba" stroke-width="1.3" stroke-opacity="0.95"/>
<line x1="383.2" y1="176.9" x2="382.4" y2="191.9" stroke="#8179cc" stroke-width="1" stroke-opacity="0.57"/>
<polygon points="408.1,150.0 397.7,163.1 401.8,245.0 415.4,245.0 411.3,169.0" fill="#1a182d" fill-opacity="0.65"/>
<polygon points="408.1,150.0 411.3,169.0 415.4,245.0 421.8,245.0 417.7,162.7" fill="#2c284c" fill-opacity="0.65"/>
<polygon points="408.1,150.0 397.7,163.1 411.3,169.0" fill="#625bab" fill-opacity="0.52"/>
<polyline points="401.8,245.0 397.7,163.1 408.1,150.0 417.7,162.7 421.8,245.0" fill="none" stroke="#625bab" stroke-width="1.3" stroke-opacity="0.95"/>
<line x1="405.0" y1="167.7" x2="405.8" y2="182.7" stroke="#6c64bc" stroke-width="1" stroke-opacity="0.57"/>
<polygon points="408.5,181.5 413.8,184.7 410.1,189.4" fill="#7168c4" fill-opacity="0.45"/>
<polygon points="429.0,138.0 418.3,151.2 413.6,245.0 426.1,245.0 430.8,155.9" fill="#3e183e" fill-opacity="0.65"/>
<polygon points="429.0,138.0 430.8,155.9 426.1,245.0 431.6,245.0 436.3,149.7" fill="#672867" fill-opacity="0.65"/>
<polygon points="429.0,138.0 418.3,151.2 430.8,155.9" fill="#e75be7" fill-opacity="0.52"/>
<polyline points="413.6,245.0 418.3,151.2 429.0,138.0 436.3,149.7 431.6,245.0" fill="none" stroke="#e75be7" stroke-width="1.3" stroke-opacity="0.95"/>
<line x1="431.4" y1="153.7" x2="430.6" y2="168.7" stroke="#fe64fe" stroke-width="1" stroke-opacity="0.57"/>
<polygon points="443.6,153.0 436.5,164.6 440.6,245.0 447.4,245.0 443.3,167.4" fill="#461845" fill-opacity="0.65"/>
<polygon points="443.6,153.0 443.3,167.4 447.4,245.0 456.6,245.0 452.5,161.5" fill="#752873" fill-opacity="0.65"/>
<polygon points="443.6,153.0 436.5,164.6 443.3,167.4" fill="#ff5bff" fill-opacity="0.52"/>
<polyline points="440.6,245.0 436.5,164.6 443.6,153.0 452.5,161.5 456.6,245.0" fill="none" stroke="#ff5bff" stroke-width="1.3" stroke-opacity="0.95"/>
<line x1="444.1" y1="165.6" x2="444.8" y2="180.6" stroke="#ff64ff" stroke-width="1" stroke-opacity="0.57"/>
<polygon points="457.3,127.0 449.8,133.7 447.6,245.0 453.3,245.0 455.5,139.5" fill="#4e1d4d" fill-opacity="0.65"/>
<polygon points="457.3,127.0 455.5,139.5 453.3,245.0 463.6,245.0 465.8,136.0" fill="#823181" fill-opacity="0.65"/>
<polygon points="457.3,127.0 449.8,133.7 455.5,139.5" fill="#ff6eff" fill-opacity="0.52"/>
<polyline points="447.6,245.0 449.8,133.7 457.3,127.0 465.8,136.0 463.6,245.0" fill="none" stroke="#ff6eff" stroke-width="1.3" stroke-opacity="0.95"/>
<line x1="459.1" y1="142.8" x2="458.8" y2="157.8" stroke="#ff79ff" stroke-width="1" stroke-opacity="0.57"/>
<polygon points="398.3,190.0 391.0,199.8 391.0,248.0 399.0,248.0 399.0,204.5" fill="#25152c" fill-opacity="0.65"/>
<polygon points="398.3,190.0 399.0,204.5 399.0,248.0 405.0,248.0 405.0,200.9" fill="#3e234a" fill-opacity="0.65"/>
<polygon points="398.3,190.0 391.0,199.8 399.0,204.5" fill="#8c4fa7" fill-opacity="0.52"/>
<polyline points="391.0,248.0 391.0,199.8 398.3,190.0 405.0,200.9 405.0,248.0" fill="none" stroke="#8c4fa7" stroke-width="1.3" stroke-opacity="0.95"/>
<line x1="393.9" y1="206.8" x2="393.9" y2="221.8" stroke="#9a57b7" stroke-width="1" stroke-opacity="0.57"/>
<polygon points="424.6,195.0 418.0,201.6 418.0,248.0 423.7,248.0 423.7,205.7" fill="#2d1030" fill-opacity="0.65"/>
<polygon points="424.6,195.0 423.7,205.7 423.7,248.0 432.0,248.0 432.0,203.0" fill="#4c1b51" fill-opacity="0.65"/>
<polygon points="424.6,195.0 423.7,205.7 432.0,203.0" fill="#ab3cb6" fill-opacity="0.52"/>
<polyline points="418.0,248.0 418.0,201.6 424.6,195.0 432.0,203.0 432.0,248.0" fill="none" stroke="#ab3cb6" stroke-width="1.3" stroke-opacity="0.95"/>
<line x1="426.0" y1="210.2" x2="426.0" y2="225.2" stroke="#bc42c8" stroke-width="1" stroke-opacity="0.57"/>
<polygon points="427.8,223.0 430.9,224.8 428.8,227.6" fill="#c445d1" fill-opacity="0.45"/>
<polygon points="452.4,195.0 445.0,204.4 445.0,248.0 453.2,248.0 453.2,209.4" fill="#361035" fill-opacity="0.65"/>
<polygon points="452.4,195.0 453.2,209.4 453.2,248.0 459.0,248.0 459.0,205.7" fill="#5a1b58" fill-opacity="0.65"/>
<polygon points="452.4,195.0 453.2,209.4 459.0,205.7" fill="#c93cc5" fill-opacity="0.52"/>
<polyline points="445.0,248.0 445.0,204.4 452.4,195.0 459.0,205.7 459.0,248.0" fill="none" stroke="#c93cc5" stroke-width="1.3" stroke-opacity="0.95"/>
<line x1="455.4" y1="210.9" x2="455.4" y2="225.9" stroke="#dd42d9" stroke-width="1" stroke-opacity="0.57"/>
<polygon points="454.1,228.5 459.5,231.7 455.7,236.6" fill="#e745e3" fill-opacity="0.45"/>
</g>
<rect x="0" y="150" width="466" height="120" fill="url(#lowdark)"/>
<g filter="url(#soft2)">
<polygon points="107.2,242.0 100.8,249.8 99.3,272.0 103.5,272.0 105.0,251.9" fill="#0f0d06" fill-opacity="0.88"/>
<polygon points="107.2,242.0 105.0,251.9 103.5,272.0 113.0,272.0 114.5,247.5" fill="#19160a" fill-opacity="0.88"/>
<polygon points="107.2,242.0 100.8,249.8 105.0,251.9" fill="#302913" fill-opacity="0.70"/>
<polyline points="99.3,272.0 100.8,249.8 107.2,242.0 114.5,247.5 113.0,272.0" fill="none" stroke="#302913" stroke-width="1.0" stroke-opacity="0.45"/>
<line x1="111.7" y1="254.2" x2="110.8" y2="269.2" stroke="#342d15" stroke-width="1" stroke-opacity="0.27"/>
<polygon points="221.6,236.6 214.2,244.6 209.0,272.0 215.9,272.0 221.0,246.8" fill="#0d170a" fill-opacity="0.88"/>
<polygon points="221.6,236.6 221.0,246.8 215.9,272.0 220.5,272.0 225.7,242.2" fill="#162711" fill-opacity="0.88"/>
<polygon points="221.6,236.6 221.0,246.8 225.7,242.2" fill="#294920" fill-opacity="0.70"/>
<polyline points="209.0,272.0 214.2,244.6 221.6,236.6 225.7,242.2 220.5,272.0" fill="none" stroke="#294920" stroke-width="1.0" stroke-opacity="0.45"/>
<line x1="220.6" y1="248.3" x2="217.8" y2="263.3" stroke="#2d5023" stroke-width="1" stroke-opacity="0.27"/>
<polygon points="215.7,266.2 219.6,268.6 216.9,272.1" fill="#2f5424" fill-opacity="0.62"/>
<polygon points="413.5,245.7 401.4,256.8 399.8,272.0 413.0,272.0 414.6,263.0" fill="#100d12" fill-opacity="0.88"/>
<polygon points="413.5,245.7 414.6,263.0 413.0,272.0 419.0,272.0 420.6,257.7" fill="#1b161e" fill-opacity="0.88"/>
<polygon points="413.5,245.7 401.4,256.8 414.6,263.0" fill="#332939" fill-opacity="0.70"/>
<polyline points="399.8,272.0 401.4,256.8 413.5,245.7 420.6,257.7 419.0,272.0" fill="none" stroke="#332939" stroke-width="1.0" stroke-opacity="0.45"/>
<line x1="410.9" y1="262.3" x2="409.2" y2="277.3" stroke="#382d3f" stroke-width="1" stroke-opacity="0.27"/>
<polygon points="364.9,248.8 357.6,256.8 357.0,272.0 363.6,272.0 364.2,261.4" fill="#0a100c" fill-opacity="0.88"/>
<polygon points="364.9,248.8 364.2,261.4 363.6,272.0 371.3,272.0 371.8,257.2" fill="#111b14" fill-opacity="0.88"/>
<polygon points="364.9,248.8 364.2,261.4 371.8,257.2" fill="#203326" fill-opacity="0.70"/>
<polyline points="357.0,272.0 357.6,256.8 364.9,248.8 371.8,257.2 371.3,272.0" fill="none" stroke="#203326" stroke-width="1.0" stroke-opacity="0.45"/>
<line x1="360.7" y1="262.1" x2="360.1" y2="277.1" stroke="#23382a" stroke-width="1" stroke-opacity="0.27"/>
<polygon points="325.9,238.2 318.0,245.4 315.1,272.0 323.5,272.0 326.4,248.4" fill="#0a1408" fill-opacity="0.88"/>
<polygon points="325.9,238.2 326.4,248.4 323.5,272.0 328.4,272.0 331.3,244.3" fill="#11220d" fill-opacity="0.88"/>
<polygon points="325.9,238.2 318.0,245.4 326.4,248.4" fill="#204019" fill-opacity="0.70"/>
<polyline points="315.1,272.0 318.0,245.4 325.9,238.2 331.3,244.3 328.4,272.0" fill="none" stroke="#204019" stroke-width="1.0" stroke-opacity="0.45"/>
<line x1="327.5" y1="255.0" x2="325.9" y2="270.0" stroke="#23461c" stroke-width="1" stroke-opacity="0.27"/>
<polygon points="321.8,266.1 324.9,268.0 322.7,270.7" fill="#24491d" fill-opacity="0.62"/>
<polygon points="134.3,240.0 124.5,253.8 123.6,272.0 132.0,272.0 133.0,258.1" fill="#0a1408" fill-opacity="0.88"/>
<polygon points="134.3,240.0 133.0,258.1 132.0,272.0 142.3,272.0 143.3,253.6" fill="#11220d" fill-opacity="0.88"/>
<polygon points="134.3,240.0 133.0,258.1 143.3,253.6" fill="#204019" fill-opacity="0.70"/>
<polyline points="123.6,272.0 124.5,253.8 134.3,240.0 143.3,253.6 142.3,272.0" fill="none" stroke="#204019" stroke-width="1.0" stroke-opacity="0.45"/>
<line x1="131.4" y1="257.3" x2="130.6" y2="272.3" stroke="#23461c" stroke-width="1" stroke-opacity="0.27"/>
<polygon points="130.0,258.6 135.7,262.0 131.7,267.2" fill="#24491d" fill-opacity="0.62"/>
<polygon points="446.3,251.4 440.3,256.6 442.8,272.0 451.2,272.0 448.7,260.6" fill="#0d0a10" fill-opacity="0.88"/>
<polygon points="446.3,251.4 448.7,260.6 451.2,272.0 455.7,272.0 453.2,259.2" fill="#16111b" fill-opacity="0.88"/>
<polygon points="446.3,251.4 448.7,260.6 453.2,259.2" fill="#292033" fill-opacity="0.70"/>
<polyline points="442.8,272.0 440.3,256.6 446.3,251.4 453.2,259.2 455.7,272.0" fill="none" stroke="#292033" stroke-width="1.0" stroke-opacity="0.45"/>
<line x1="445.8" y1="263.1" x2="448.4" y2="278.1" stroke="#2d2338" stroke-width="1" stroke-opacity="0.27"/>
<polygon points="450.4,275.3 454.5,277.7 451.7,281.3" fill="#2f243a" fill-opacity="0.62"/>
<polygon points="290.3,244.5 281.3,254.8 280.2,272.0 290.3,272.0 291.5,258.8" fill="#0e180b" fill-opacity="0.88"/>
<polygon points="290.3,244.5 291.5,258.8 290.3,272.0 295.2,272.0 296.4,254.0" fill="#172812" fill-opacity="0.88"/>
<polygon points="290.3,244.5 281.3,254.8 291.5,258.8" fill="#2c4c23" fill-opacity="0.70"/>
<polyline points="280.2,272.0 281.3,254.8 290.3,244.5 296.4,254.0 295.2,272.0" fill="none" stroke="#2c4c23" stroke-width="1.0" stroke-opacity="0.45"/>
<line x1="287.4" y1="263.3" x2="286.4" y2="278.3" stroke="#315426" stroke-width="1" stroke-opacity="0.27"/>
<polygon points="144.5,229.8 139.0,241.1 145.9,272.0 153.6,272.0 146.7,244.4" fill="#0d170a" fill-opacity="0.88"/>
<polygon points="144.5,229.8 146.7,244.4 153.6,272.0 161.8,272.0 154.9,239.8" fill="#162711" fill-opacity="0.88"/>
<polygon points="144.5,229.8 146.7,244.4 154.9,239.8" fill="#294920" fill-opacity="0.70"/>
<polyline points="145.9,272.0 139.0,241.1 144.5,229.8 154.9,239.8 161.8,272.0" fill="none" stroke="#294920" stroke-width="1.0" stroke-opacity="0.45"/>
<line x1="149.2" y1="242.6" x2="152.5" y2="257.6" stroke="#2d5023" stroke-width="1" stroke-opacity="0.27"/>
<polygon points="154.7,259.0 158.6,261.3 155.9,264.9" fill="#2f5424" fill-opacity="0.62"/>
<polygon points="212.3,235.4 206.6,243.9 210.9,272.0 219.3,272.0 215.0,248.2" fill="#091107" fill-opacity="0.88"/>
<polygon points="212.3,235.4 215.0,248.2 219.3,272.0 224.1,272.0 219.8,246.0" fill="#0f1c0b" fill-opacity="0.88"/>
<polygon points="212.3,235.4 206.6,243.9 215.0,248.2" fill="#1c3616" fill-opacity="0.70"/>
<polyline points="210.9,272.0 206.6,243.9 212.3,235.4 219.8,246.0 224.1,272.0" fill="none" stroke="#1c3616" stroke-width="1.0" stroke-opacity="0.45"/>
<line x1="215.7" y1="254.6" x2="218.1" y2="269.6" stroke="#1f3b18" stroke-width="1" stroke-opacity="0.27"/>
<polygon points="57.3,241.0 50.3,250.3 53.2,272.0 61.0,272.0 58.1,253.7" fill="#151008" fill-opacity="0.88"/>
<polygon points="57.3,241.0 58.1,253.7 61.0,272.0 69.7,272.0 66.8,247.9" fill="#231b0d" fill-opacity="0.88"/>
<polygon points="57.3,241.0 50.3,250.3 58.1,253.7" fill="#433319" fill-opacity="0.70"/>
<polyline points="53.2,272.0 50.3,250.3 57.3,241.0 66.8,247.9 69.7,272.0" fill="none" stroke="#433319" stroke-width="1.0" stroke-opacity="0.45"/>
<line x1="56.9" y1="258.2" x2="58.8" y2="273.2" stroke="#49381c" stroke-width="1" stroke-opacity="0.27"/>
<polygon points="58.7,271.6 63.1,274.3 60.0,278.3" fill="#4d3a1d" fill-opacity="0.62"/>
<polygon points="304.7,243.0 295.6,249.0 292.4,272.0 302.4,272.0 305.6,253.3" fill="#0d170a" fill-opacity="0.88"/>
<polygon points="304.7,243.0 305.6,253.3 302.4,272.0 307.0,272.0 310.2,251.1" fill="#162711" fill-opacity="0.88"/>
<polygon points="304.7,243.0 305.6,253.3 310.2,251.1" fill="#294920" fill-opacity="0.70"/>
<polyline points="292.4,272.0 295.6,249.0 304.7,243.0 310.2,251.1 307.0,272.0" fill="none" stroke="#294920" stroke-width="1.0" stroke-opacity="0.45"/>
<line x1="306.1" y1="254.4" x2="303.9" y2="269.4" stroke="#2d5023" stroke-width="1" stroke-opacity="0.27"/>
<polygon points="35.2,243.6 28.9,254.6 30.6,272.0 37.1,272.0 35.4,259.2" fill="#0f0d06" fill-opacity="0.88"/>
<polygon points="35.2,243.6 35.4,259.2 37.1,272.0 46.5,272.0 44.8,254.9" fill="#19160a" fill-opacity="0.88"/>
<polygon points="35.2,243.6 28.9,254.6 35.4,259.2" fill="#302913" fill-opacity="0.70"/>
<polyline points="30.6,272.0 28.9,254.6 35.2,243.6 44.8,254.9 46.5,272.0" fill="none" stroke="#302913" stroke-width="1.0" stroke-opacity="0.45"/>
<line x1="36.0" y1="264.6" x2="37.5" y2="279.6" stroke="#342d15" stroke-width="1" stroke-opacity="0.27"/>
<polygon points="40.9,260.3 46.9,263.9 42.7,269.3" fill="#372f16" fill-opacity="0.62"/>
<polygon points="464.4,239.6 456.8,252.4 461.6,272.0 473.3,272.0 468.5,256.3" fill="#120c15" fill-opacity="0.88"/>
<polygon points="464.4,239.6 468.5,256.3 473.3,272.0 481.1,272.0 476.3,253.3" fill="#1e1423" fill-opacity="0.88"/>
<polygon points="464.4,239.6 468.5,256.3 476.3,253.3" fill="#392643" fill-opacity="0.70"/>
<polyline points="461.6,272.0 456.8,252.4 464.4,239.6 476.3,253.3 481.1,272.0" fill="none" stroke="#392643" stroke-width="1.0" stroke-opacity="0.45"/>
<line x1="471.1" y1="260.3" x2="474.6" y2="275.3" stroke="#3f2a49" stroke-width="1" stroke-opacity="0.27"/>
<polygon points="456.8,232.6 448.2,242.8 442.0,272.0 450.4,272.0 456.6,244.4" fill="#0f0b13" fill-opacity="0.88"/>
<polygon points="456.8,232.6 456.6,244.4 450.4,272.0 454.5,272.0 460.7,242.9" fill="#191220" fill-opacity="0.88"/>
<polygon points="456.8,232.6 456.6,244.4 460.7,242.9" fill="#30233c" fill-opacity="0.70"/>
<polyline points="442.0,272.0 448.2,242.8 456.8,232.6 460.7,242.9 454.5,272.0" fill="none" stroke="#30233c" stroke-width="1.0" stroke-opacity="0.45"/>
<line x1="450.8" y1="249.2" x2="447.8" y2="264.2" stroke="#342642" stroke-width="1" stroke-opacity="0.27"/>
<polygon points="453.3,252.3 457.1,254.5 454.4,258.0" fill="#372845" fill-opacity="0.62"/>
<polygon points="191.6,244.4 185.9,258.4 188.6,272.0 197.0,272.0 194.2,261.2" fill="#091107" fill-opacity="0.88"/>
<polygon points="191.6,244.4 194.2,261.2 197.0,272.0 204.8,272.0 202.0,255.4" fill="#0f1c0b" fill-opacity="0.88"/>
<polygon points="191.6,244.4 185.9,258.4 194.2,261.2" fill="#1c3616" fill-opacity="0.70"/>
<polyline points="188.6,272.0 185.9,258.4 191.6,244.4 202.0,255.4 204.8,272.0" fill="none" stroke="#1c3616" stroke-width="1.0" stroke-opacity="0.45"/>
<line x1="190.3" y1="266.3" x2="193.1" y2="281.3" stroke="#1f3b18" stroke-width="1" stroke-opacity="0.27"/>
<polygon points="193.9,266.9 200.0,270.6 195.8,276.1" fill="#213e19" fill-opacity="0.62"/>
<polygon points="55.6,250.3 50.4,258.5 53.5,272.0 59.5,272.0 56.5,262.1" fill="#0f0d06" fill-opacity="0.88"/>
<polygon points="55.6,250.3 56.5,262.1 59.5,272.0 68.4,272.0 65.3,258.1" fill="#19160a" fill-opacity="0.88"/>
<polygon points="55.6,250.3 50.4,258.5 56.5,262.1" fill="#302913" fill-opacity="0.70"/>
<polyline points="53.5,272.0 50.4,258.5 55.6,250.3 65.3,258.1 68.4,272.0" fill="none" stroke="#302913" stroke-width="1.0" stroke-opacity="0.45"/>
<line x1="60.3" y1="260.4" x2="63.7" y2="275.4" stroke="#342d15" stroke-width="1" stroke-opacity="0.27"/>
<polygon points="56.8,265.9 59.9,267.8 57.7,270.7" fill="#372f16" fill-opacity="0.62"/>
<polygon points="457.8,248.8 453.1,255.5 454.7,272.0 459.5,272.0 457.9,257.6" fill="#100d12" fill-opacity="0.88"/>
<polygon points="457.8,248.8 457.9,257.6 459.5,272.0 465.5,272.0 464.0,255.2" fill="#1b161e" fill-opacity="0.88"/>
<polygon points="457.8,248.8 453.1,255.5 457.9,257.6" fill="#332939" fill-opacity="0.70"/>
<polyline points="454.7,272.0 453.1,255.5 457.8,248.8 464.0,255.2 465.5,272.0" fill="none" stroke="#332939" stroke-width="1.0" stroke-opacity="0.45"/>
<line x1="456.5" y1="259.5" x2="457.9" y2="274.5" stroke="#382d3f" stroke-width="1" stroke-opacity="0.27"/>
<polygon points="461.2,271.0 464.2,272.8 462.1,275.5" fill="#3a2f42" fill-opacity="0.62"/>
<polygon points="33.6,233.9 25.7,238.5 23.5,272.0 32.5,272.0 34.6,243.7" fill="#0f0d06" fill-opacity="0.88"/>
<polygon points="33.6,233.9 34.6,243.7 32.5,272.0 37.2,272.0 39.4,240.8" fill="#19160a" fill-opacity="0.88"/>
<polygon points="33.6,233.9 34.6,243.7 39.4,240.8" fill="#302913" fill-opacity="0.70"/>
<polyline points="23.5,272.0 25.7,238.5 33.6,233.9 39.4,240.8 37.2,272.0" fill="none" stroke="#302913" stroke-width="1.0" stroke-opacity="0.45"/>
<line x1="31.0" y1="249.9" x2="30.0" y2="264.9" stroke="#342d15" stroke-width="1" stroke-opacity="0.27"/>
<polygon points="30.2,245.7 33.7,247.8 31.3,250.9" fill="#372f16" fill-opacity="0.62"/>
<polygon points="275.0,240.9 267.3,252.0 263.2,272.0 268.7,272.0 272.8,253.5" fill="#0d170a" fill-opacity="0.88"/>
<polygon points="275.0,240.9 272.8,253.5 268.7,272.0 275.4,272.0 279.5,251.6" fill="#162711" fill-opacity="0.88"/>
<polygon points="275.0,240.9 267.3,252.0 272.8,253.5" fill="#294920" fill-opacity="0.70"/>
<polyline points="263.2,272.0 267.3,252.0 275.0,240.9 279.5,251.6 275.4,272.0" fill="none" stroke="#294920" stroke-width="1.0" stroke-opacity="0.45"/>
<line x1="273.1" y1="253.4" x2="270.3" y2="268.4" stroke="#2d5023" stroke-width="1" stroke-opacity="0.27"/>
<polygon points="308.7,243.1 299.3,255.0 297.2,272.0 303.4,272.0 305.4,259.2" fill="#0a1408" fill-opacity="0.88"/>
<polygon points="308.7,243.1 305.4,259.2 303.4,272.0 315.2,272.0 317.2,252.7" fill="#11220d" fill-opacity="0.88"/>
<polygon points="308.7,243.1 299.3,255.0 305.4,259.2" fill="#204019" fill-opacity="0.70"/>
<polyline points="297.2,272.0 299.3,255.0 308.7,243.1 317.2,252.7 315.2,272.0" fill="none" stroke="#204019" stroke-width="1.0" stroke-opacity="0.45"/>
<line x1="311.2" y1="257.0" x2="309.4" y2="272.0" stroke="#23461c" stroke-width="1" stroke-opacity="0.27"/>
<polygon points="310.8,261.7 315.1,264.2 312.1,268.0" fill="#24491d" fill-opacity="0.62"/>
<polygon points="6.8,248.5 -0.2,257.2 -1.5,272.0 6.1,272.0 7.5,259.6" fill="#150e06" fill-opacity="0.88"/>
<polygon points="6.8,248.5 7.5,259.6 6.1,272.0 9.7,272.0 11.0,258.0" fill="#23170a" fill-opacity="0.88"/>
<polygon points="6.8,248.5 -0.2,257.2 7.5,259.6" fill="#432c13" fill-opacity="0.70"/>
<polyline points="-1.5,272.0 -0.2,257.2 6.8,248.5 11.0,258.0 9.7,272.0" fill="none" stroke="#432c13" stroke-width="1.0" stroke-opacity="0.45"/>
<line x1="7.2" y1="262.9" x2="5.9" y2="277.9" stroke="#493115" stroke-width="1" stroke-opacity="0.27"/>
<polygon points="45.0,246.5 35.7,259.4 35.4,272.0 42.6,272.0 42.9,265.9" fill="#150e06" fill-opacity="0.88"/>
<polygon points="45.0,246.5 42.9,265.9 42.6,272.0 54.7,272.0 55.0,263.1" fill="#23170a" fill-opacity="0.88"/>
<polygon points="45.0,246.5 42.9,265.9 55.0,263.1" fill="#432c13" fill-opacity="0.70"/>
<polyline points="35.4,272.0 35.7,259.4 45.0,246.5 55.0,263.1 54.7,272.0" fill="none" stroke="#432c13" stroke-width="1.0" stroke-opacity="0.45"/>
<line x1="44.8" y1="268.7" x2="44.4" y2="283.7" stroke="#493115" stroke-width="1" stroke-opacity="0.27"/>
<polygon points="114.5,243.2 102.8,256.2 98.7,272.0 106.4,272.0 110.4,259.3" fill="#0f0d06" fill-opacity="0.88"/>
<polygon points="114.5,243.2 110.4,259.3 106.4,272.0 118.1,272.0 122.2,255.8" fill="#19160a" fill-opacity="0.88"/>
<polygon points="114.5,243.2 110.4,259.3 122.2,255.8" fill="#302913" fill-opacity="0.70"/>
<polyline points="98.7,272.0 102.8,256.2 114.5,243.2 122.2,255.8 118.1,272.0" fill="none" stroke="#302913" stroke-width="1.0" stroke-opacity="0.45"/>
<line x1="111.5" y1="261.0" x2="108.0" y2="276.0" stroke="#342d15" stroke-width="1" stroke-opacity="0.27"/>
<polygon points="108.8,277.9 113.3,280.6 110.2,284.7" fill="#372f16" fill-opacity="0.62"/>
<polygon points="185.5,243.1 178.6,251.8 176.1,272.0 182.0,272.0 184.5,254.9" fill="#0e180b" fill-opacity="0.88"/>
<polygon points="185.5,243.1 184.5,254.9 182.0,272.0 187.7,272.0 190.2,252.9" fill="#172812" fill-opacity="0.88"/>
<polygon points="185.5,243.1 178.6,251.8 184.5,254.9" fill="#2c4c23" fill-opacity="0.70"/>
<polyline points="176.1,272.0 178.6,251.8 185.5,243.1 190.2,252.9 187.7,272.0" fill="none" stroke="#2c4c23" stroke-width="1.0" stroke-opacity="0.45"/>
<line x1="182.8" y1="255.6" x2="180.9" y2="270.6" stroke="#315426" stroke-width="1" stroke-opacity="0.27"/>
<polygon points="181.4,263.3 185.4,265.7 182.6,269.2" fill="#335828" fill-opacity="0.62"/>
<polygon points="448.9,236.5 438.8,249.2 437.7,272.0 449.5,272.0 450.6,251.9" fill="#100d12" fill-opacity="0.88"/>
<polygon points="448.9,236.5 450.6,251.9 449.5,272.0 454.7,272.0 455.9,246.9" fill="#1b161e" fill-opacity="0.88"/>
<polygon points="448.9,236.5 438.8,249.2 450.6,251.9" fill="#332939" fill-opacity="0.70"/>
<polyline points="437.7,272.0 438.8,249.2 448.9,236.5 455.9,246.9 454.7,272.0" fill="none" stroke="#332939" stroke-width="1.0" stroke-opacity="0.45"/>
<line x1="450.5" y1="251.3" x2="449.7" y2="266.3" stroke="#382d3f" stroke-width="1" stroke-opacity="0.27"/>
<polygon points="446.7,257.4 453.1,261.3 448.6,267.0" fill="#3a2f42" fill-opacity="0.62"/>
<polygon points="194.4,238.1 185.4,251.0 185.8,272.0 196.5,272.0 196.1,255.0" fill="#0d170a" fill-opacity="0.88"/>
<polygon points="194.4,238.1 196.1,255.0 196.5,272.0 202.8,272.0 202.5,250.7" fill="#162711" fill-opacity="0.88"/>
<polygon points="194.4,238.1 196.1,255.0 202.5,250.7" fill="#294920" fill-opacity="0.70"/>
<polyline points="185.8,272.0 185.4,251.0 194.4,238.1 202.5,250.7 202.8,272.0" fill="none" stroke="#294920" stroke-width="1.0" stroke-opacity="0.45"/>
<line x1="197.6" y1="256.0" x2="197.8" y2="271.0" stroke="#2d5023" stroke-width="1" stroke-opacity="0.27"/>
<polygon points="450.5,240.3 444.3,248.0 442.6,272.0 446.7,272.0 448.3,252.2" fill="#120c15" fill-opacity="0.88"/>
<polygon points="450.5,240.3 448.3,252.2 446.7,272.0 454.9,272.0 456.6,248.2" fill="#1e1423" fill-opacity="0.88"/>
<polygon points="450.5,240.3 448.3,252.2 456.6,248.2" fill="#392643" fill-opacity="0.70"/>
<polyline points="442.6,272.0 444.3,248.0 450.5,240.3 456.6,248.2 454.9,272.0" fill="none" stroke="#392643" stroke-width="1.0" stroke-opacity="0.45"/>
<line x1="452.5" y1="252.3" x2="451.4" y2="267.3" stroke="#3f2a49" stroke-width="1" stroke-opacity="0.27"/>
<polygon points="315.5,221.0 304.0,232.7 296.7,272.0 305.8,272.0 313.1,236.6" fill="#0d170a" fill-opacity="0.88"/>
<polygon points="315.5,221.0 313.1,236.6 305.8,272.0 316.0,272.0 323.4,230.1" fill="#162711" fill-opacity="0.88"/>
<polygon points="315.5,221.0 304.0,232.7 313.1,236.6" fill="#294920" fill-opacity="0.70"/>
<polyline points="296.7,272.0 304.0,232.7 315.5,221.0 323.4,230.1 316.0,272.0" fill="none" stroke="#294920" stroke-width="1.0" stroke-opacity="0.45"/>
<line x1="317.6" y1="236.1" x2="314.9" y2="251.1" stroke="#2d5023" stroke-width="1" stroke-opacity="0.27"/>
<polygon points="312.4,248.4 316.3,250.7 313.6,254.2" fill="#2f5424" fill-opacity="0.62"/>
<polygon points="154.0,231.3 145.8,240.4 143.7,272.0 151.0,272.0 153.2,245.6" fill="#0d170a" fill-opacity="0.88"/>
<polygon points="154.0,231.3 153.2,245.6 151.0,272.0 158.5,272.0 160.7,241.2" fill="#162711" fill-opacity="0.88"/>
<polygon points="154.0,231.3 153.2,245.6 160.7,241.2" fill="#294920" fill-opacity="0.70"/>
<polyline points="143.7,272.0 145.8,240.4 154.0,231.3 160.7,241.2 158.5,272.0" fill="none" stroke="#294920" stroke-width="1.0" stroke-opacity="0.45"/>
<line x1="149.5" y1="247.3" x2="148.4" y2="262.3" stroke="#2d5023" stroke-width="1" stroke-opacity="0.27"/>
<polygon points="150.3,257.4 154.8,260.2 151.7,264.2" fill="#2f5424" fill-opacity="0.62"/>
<polygon points="328.1,237.6 322.0,248.3 324.5,272.0 332.2,272.0 329.6,250.5" fill="#0e180b" fill-opacity="0.88"/>
<polygon points="328.1,237.6 329.6,250.5 332.2,272.0 338.2,272.0 335.6,246.1" fill="#172812" fill-opacity="0.88"/>
<polygon points="328.1,237.6 329.6,250.5 335.6,246.1" fill="#2c4c23" fill-opacity="0.70"/>
<polyline points="324.5,272.0 322.0,248.3 328.1,237.6 335.6,246.1 338.2,272.0" fill="none" stroke="#2c4c23" stroke-width="1.0" stroke-opacity="0.45"/>
<line x1="332.6" y1="254.4" x2="334.1" y2="269.4" stroke="#315426" stroke-width="1" stroke-opacity="0.27"/>
<polygon points="329.5,254.3 333.2,256.5 330.6,259.9" fill="#335828" fill-opacity="0.62"/>
<polygon points="335.4,244.9 327.5,255.5 326.3,272.0 331.9,272.0 333.1,259.9" fill="#0b1115" fill-opacity="0.88"/>
<polygon points="335.4,244.9 333.1,259.9 331.9,272.0 342.0,272.0 343.1,257.7" fill="#121c23" fill-opacity="0.88"/>
<polygon points="335.4,244.9 327.5,255.5 333.1,259.9" fill="#233643" fill-opacity="0.70"/>
<polyline points="326.3,272.0 327.5,255.5 335.4,244.9 343.1,257.7 342.0,272.0" fill="none" stroke="#233643" stroke-width="1.0" stroke-opacity="0.45"/>
<line x1="331.6" y1="262.5" x2="330.5" y2="277.5" stroke="#263b49" stroke-width="1" stroke-opacity="0.27"/>
<polygon points="301.0,236.9 293.6,244.3 291.7,272.0 297.7,272.0 299.7,249.1" fill="#091107" fill-opacity="0.88"/>
<polygon points="301.0,236.9 299.7,249.1 297.7,272.0 305.9,272.0 307.8,243.8" fill="#0f1c0b" fill-opacity="0.88"/>
<polygon points="301.0,236.9 299.7,249.1 307.8,243.8" fill="#1c3616" fill-opacity="0.70"/>
<polyline points="291.7,272.0 293.6,244.3 301.0,236.9 307.8,243.8 305.9,272.0" fill="none" stroke="#1c3616" stroke-width="1.0" stroke-opacity="0.45"/>
<line x1="302.9" y1="251.9" x2="301.8" y2="266.9" stroke="#1f3b18" stroke-width="1" stroke-opacity="0.27"/>
<polygon points="165.2,226.9 160.7,236.7 169.0,272.0 174.6,272.0 166.2,239.0" fill="#0d170a" fill-opacity="0.88"/>
<polygon points="165.2,226.9 166.2,239.0 174.6,272.0 182.9,272.0 174.5,235.0" fill="#162711" fill-opacity="0.88"/>
<polygon points="165.2,226.9 160.7,236.7 166.2,239.0" fill="#294920" fill-opacity="0.70"/>
<polyline points="169.0,272.0 160.7,236.7 165.2,226.9 174.5,235.0 182.9,272.0" fill="none" stroke="#294920" stroke-width="1.0" stroke-opacity="0.45"/>
<line x1="166.8" y1="241.9" x2="170.2" y2="256.9" stroke="#2d5023" stroke-width="1" stroke-opacity="0.27"/>
<polygon points="162.7,242.0 156.7,251.3 155.7,272.0 161.6,272.0 162.6,252.5" fill="#091107" fill-opacity="0.88"/>
<polygon points="162.7,242.0 162.6,252.5 161.6,272.0 166.8,272.0 167.8,248.1" fill="#0f1c0b" fill-opacity="0.88"/>
<polygon points="162.7,242.0 162.6,252.5 167.8,248.1" fill="#1c3616" fill-opacity="0.70"/>
<polyline points="155.7,272.0 156.7,251.3 162.7,242.0 167.8,248.1 166.8,272.0" fill="none" stroke="#1c3616" stroke-width="1.0" stroke-opacity="0.45"/>
<line x1="162.7" y1="257.0" x2="162.0" y2="272.0" stroke="#1f3b18" stroke-width="1" stroke-opacity="0.27"/>
<polygon points="159.1,274.3 162.7,276.5 160.2,279.7" fill="#213e19" fill-opacity="0.62"/>
<polygon points="402.8,247.6 395.3,256.7 394.7,272.0 400.9,272.0 401.5,259.5" fill="#120c15" fill-opacity="0.88"/>
<polygon points="402.8,247.6 401.5,259.5 400.9,272.0 410.2,272.0 410.7,253.7" fill="#1e1423" fill-opacity="0.88"/>
<polygon points="402.8,247.6 401.5,259.5 410.7,253.7" fill="#392643" fill-opacity="0.70"/>
<polyline points="394.7,272.0 395.3,256.7 402.8,247.6 410.7,253.7 410.2,272.0" fill="none" stroke="#392643" stroke-width="1.0" stroke-opacity="0.45"/>
<line x1="406.6" y1="265.2" x2="406.1" y2="280.2" stroke="#3f2a49" stroke-width="1" stroke-opacity="0.27"/>
<polygon points="403.1,271.7 408.1,274.7 404.6,279.2" fill="#422c4d" fill-opacity="0.62"/>
<polygon points="459.3,245.1 454.1,250.2 458.9,272.0 466.1,272.0 461.3,255.1" fill="#100d12" fill-opacity="0.88"/>
<polygon points="459.3,245.1 461.3,255.1 466.1,272.0 471.9,272.0 467.1,252.8" fill="#1b161e" fill-opacity="0.88"/>
<polygon points="459.3,245.1 454.1,250.2 461.3,255.1" fill="#332939" fill-opacity="0.70"/>
<polyline points="458.9,272.0 454.1,250.2 459.3,245.1 467.1,252.8 471.9,272.0" fill="none" stroke="#332939" stroke-width="1.0" stroke-opacity="0.45"/>
<line x1="458.1" y1="258.8" x2="461.6" y2="273.8" stroke="#382d3f" stroke-width="1" stroke-opacity="0.27"/>
<polygon points="463.6,272.5 468.3,275.3 465.0,279.5" fill="#3a2f42" fill-opacity="0.62"/>
<polygon points="434.4,250.8 427.4,260.5 424.5,272.0 428.4,272.0 431.3,262.1" fill="#0d0a10" fill-opacity="0.88"/>
<polygon points="434.4,250.8 431.3,262.1 428.4,272.0 435.6,272.0 438.5,259.8" fill="#16111b" fill-opacity="0.88"/>
<polygon points="434.4,250.8 427.4,260.5 431.3,262.1" fill="#292033" fill-opacity="0.70"/>
<polyline points="424.5,272.0 427.4,260.5 434.4,250.8 438.5,259.8 435.6,272.0" fill="none" stroke="#292033" stroke-width="1.0" stroke-opacity="0.45"/>
<line x1="432.0" y1="263.2" x2="428.6" y2="278.2" stroke="#2d2338" stroke-width="1" stroke-opacity="0.27"/>
<polygon points="431.7,275.1 434.6,276.8 432.6,279.5" fill="#2f243a" fill-opacity="0.62"/>
<polygon points="408.3,245.3 402.0,254.6 399.9,272.0 404.9,272.0 406.9,256.2" fill="#0f0b13" fill-opacity="0.88"/>
<polygon points="408.3,245.3 406.9,256.2 404.9,272.0 411.3,272.0 413.3,255.1" fill="#191220" fill-opacity="0.88"/>
<polygon points="408.3,245.3 406.9,256.2 413.3,255.1" fill="#30233c" fill-opacity="0.70"/>
<polyline points="399.9,272.0 402.0,254.6 408.3,245.3 413.3,255.1 411.3,272.0" fill="none" stroke="#30233c" stroke-width="1.0" stroke-opacity="0.45"/>
<line x1="407.2" y1="261.4" x2="405.6" y2="276.4" stroke="#342642" stroke-width="1" stroke-opacity="0.27"/>
<polygon points="404.3,260.5 406.7,262.0 405.0,264.2" fill="#372845" fill-opacity="0.62"/>
<polygon points="90.4,233.5 82.5,241.7 81.9,272.0 90.3,272.0 90.9,246.2" fill="#150e06" fill-opacity="0.88"/>
<polygon points="90.4,233.5 90.9,246.2 90.3,272.0 96.9,272.0 97.5,242.3" fill="#23170a" fill-opacity="0.88"/>
<polygon points="90.4,233.5 90.9,246.2 97.5,242.3" fill="#432c13" fill-opacity="0.70"/>
<polyline points="81.9,272.0 82.5,241.7 90.4,233.5 97.5,242.3 96.9,272.0" fill="none" stroke="#432c13" stroke-width="1.0" stroke-opacity="0.45"/>
<line x1="89.1" y1="245.9" x2="88.8" y2="260.9" stroke="#493115" stroke-width="1" stroke-opacity="0.27"/>
<polygon points="336.0,238.1 329.6,244.2 328.4,272.0 332.5,272.0 333.8,248.7" fill="#0c1015" fill-opacity="0.88"/>
<polygon points="336.0,238.1 333.8,248.7 332.5,272.0 342.1,272.0 343.4,246.4" fill="#141b23" fill-opacity="0.88"/>
<polygon points="336.0,238.1 329.6,244.2 333.8,248.7" fill="#263343" fill-opacity="0.70"/>
<polyline points="328.4,272.0 329.6,244.2 336.0,238.1 343.4,246.4 342.1,272.0" fill="none" stroke="#263343" stroke-width="1.0" stroke-opacity="0.45"/>
<line x1="336.2" y1="248.9" x2="335.5" y2="263.9" stroke="#2a3849" stroke-width="1" stroke-opacity="0.27"/>
<polygon points="335.4,253.7 338.6,255.7 336.4,258.5" fill="#2c3a4d" fill-opacity="0.62"/>
<polygon points="7.9,232.4 3.6,240.4 8.5,272.0 13.8,272.0 9.0,244.0" fill="#0f0d06" fill-opacity="0.88"/>
<polygon points="7.9,232.4 9.0,244.0 13.8,272.0 20.1,272.0 15.3,239.3" fill="#19160a" fill-opacity="0.88"/>
<polygon points="7.9,232.4 9.0,244.0 15.3,239.3" fill="#302913" fill-opacity="0.70"/>
<polyline points="8.5,272.0 3.6,240.4 7.9,232.4 15.3,239.3 20.1,272.0" fill="none" stroke="#302913" stroke-width="1.0" stroke-opacity="0.45"/>
<line x1="7.6" y1="243.4" x2="10.0" y2="258.4" stroke="#342d15" stroke-width="1" stroke-opacity="0.27"/>
<polygon points="15.3,264.3 18.2,266.0 16.2,268.7" fill="#372f16" fill-opacity="0.62"/>
<polygon points="179.1,225.0 173.7,232.4 176.8,272.0 181.0,272.0 177.9,234.9" fill="#0a1408" fill-opacity="0.88"/>
<polygon points="179.1,225.0 177.9,234.9 181.0,272.0 190.1,272.0 187.0,230.6" fill="#11220d" fill-opacity="0.88"/>
<polygon points="179.1,225.0 177.9,234.9 187.0,230.6" fill="#204019" fill-opacity="0.70"/>
<polyline points="176.8,272.0 173.7,232.4 179.1,225.0 187.0,230.6 190.1,272.0" fill="none" stroke="#204019" stroke-width="1.0" stroke-opacity="0.45"/>
<line x1="180.0" y1="241.0" x2="181.2" y2="256.0" stroke="#23461c" stroke-width="1" stroke-opacity="0.27"/>
<polygon points="179.5,241.5 184.4,244.4 181.0,248.8" fill="#24491d" fill-opacity="0.62"/>
<polygon points="293.2,229.0 286.7,234.3 278.3,272.0 281.6,272.0 290.0,238.9" fill="#0e180b" fill-opacity="0.88"/>
<polygon points="293.2,229.0 290.0,238.9 281.6,272.0 289.2,272.0 297.6,234.5" fill="#172812" fill-opacity="0.88"/>
<polygon points="293.2,229.0 286.7,234.3 290.0,238.9" fill="#2c4c23" fill-opacity="0.70"/>
<polyline points="278.3,272.0 286.7,234.3 293.2,229.0 297.6,234.5 289.2,272.0" fill="none" stroke="#2c4c23" stroke-width="1.0" stroke-opacity="0.45"/>
<line x1="289.1" y1="238.6" x2="285.6" y2="253.6" stroke="#315426" stroke-width="1" stroke-opacity="0.27"/>
<polygon points="422.3,234.4 413.7,247.2 415.8,272.0 424.5,272.0 422.4,251.5" fill="#100d12" fill-opacity="0.88"/>
<polygon points="422.3,234.4 422.4,251.5 424.5,272.0 435.5,272.0 433.5,246.1" fill="#1b161e" fill-opacity="0.88"/>
<polygon points="422.3,234.4 422.4,251.5 433.5,246.1" fill="#332939" fill-opacity="0.70"/>
<polyline points="415.8,272.0 413.7,247.2 422.3,234.4 433.5,246.1 435.5,272.0" fill="none" stroke="#332939" stroke-width="1.0" stroke-opacity="0.45"/>
<line x1="425.2" y1="251.8" x2="426.4" y2="266.8" stroke="#382d3f" stroke-width="1" stroke-opacity="0.27"/>
<polygon points="82.3,239.1 74.7,251.3 74.3,272.0 81.3,272.0 81.7,253.7" fill="#151008" fill-opacity="0.88"/>
<polygon points="82.3,239.1 81.7,253.7 81.3,272.0 89.4,272.0 89.8,251.4" fill="#231b0d" fill-opacity="0.88"/>
<polygon points="82.3,239.1 74.7,251.3 81.7,253.7" fill="#433319" fill-opacity="0.70"/>
<polyline points="74.3,272.0 74.7,251.3 82.3,239.1 89.8,251.4 89.4,272.0" fill="none" stroke="#433319" stroke-width="1.0" stroke-opacity="0.45"/>
<line x1="86.2" y1="254.9" x2="85.9" y2="269.9" stroke="#49381c" stroke-width="1" stroke-opacity="0.27"/>
<polygon points="81.4,271.0 85.8,273.6 82.7,277.5" fill="#4d3a1d" fill-opacity="0.62"/>
<polygon points="328.1,229.0 317.8,238.4 310.0,272.0 316.7,272.0 324.5,242.0" fill="#0e180b" fill-opacity="0.88"/>
<polygon points="328.1,229.0 324.5,242.0 316.7,272.0 328.2,272.0 336.0,238.7" fill="#172812" fill-opacity="0.88"/>
<polygon points="328.1,229.0 317.8,238.4 324.5,242.0" fill="#2c4c23" fill-opacity="0.70"/>
<polyline points="310.0,272.0 317.8,238.4 328.1,229.0 336.0,238.7 328.2,272.0" fill="none" stroke="#2c4c23" stroke-width="1.0" stroke-opacity="0.45"/>
<line x1="329.0" y1="244.7" x2="325.6" y2="259.7" stroke="#315426" stroke-width="1" stroke-opacity="0.27"/>
<polygon points="325.8,254.5 329.7,256.8 327.0,260.2" fill="#335828" fill-opacity="0.62"/>
<polygon points="285.3,221.3 276.8,229.0 265.9,272.0 271.4,272.0 282.4,231.5" fill="#091107" fill-opacity="0.88"/>
<polygon points="285.3,221.3 282.4,231.5 271.4,272.0 280.5,272.0 291.5,229.5" fill="#0f1c0b" fill-opacity="0.88"/>
<polygon points="285.3,221.3 276.8,229.0 282.4,231.5" fill="#1c3616" fill-opacity="0.70"/>
<polyline points="265.9,272.0 276.8,229.0 285.3,221.3 291.5,229.5 280.5,272.0" fill="none" stroke="#1c3616" stroke-width="1.0" stroke-opacity="0.45"/>
<line x1="282.5" y1="233.5" x2="278.8" y2="248.5" stroke="#1f3b18" stroke-width="1" stroke-opacity="0.27"/>
<polygon points="94.3,245.1 84.7,256.0 83.9,272.0 91.7,272.0 92.4,259.1" fill="#120c05" fill-opacity="0.88"/>
<polygon points="94.3,245.1 92.4,259.1 91.7,272.0 103.7,272.0 104.4,253.0" fill="#1e1408" fill-opacity="0.88"/>
<polygon points="94.3,245.1 92.4,259.1 104.4,253.0" fill="#392610" fill-opacity="0.70"/>
<polyline points="83.9,272.0 84.7,256.0 94.3,245.1 104.4,253.0 103.7,272.0" fill="none" stroke="#392610" stroke-width="1.0" stroke-opacity="0.45"/>
<line x1="93.6" y1="262.4" x2="93.0" y2="277.4" stroke="#3f2a11" stroke-width="1" stroke-opacity="0.27"/>
<polygon points="370.0,241.8 363.3,247.7 361.8,272.0 369.2,272.0 370.7,250.3" fill="#0b1115" fill-opacity="0.88"/>
<polygon points="370.0,241.8 370.7,250.3 369.2,272.0 373.7,272.0 375.2,248.7" fill="#121c23" fill-opacity="0.88"/>
<polygon points="370.0,241.8 363.3,247.7 370.7,250.3" fill="#233643" fill-opacity="0.70"/>
<polyline points="361.8,272.0 363.3,247.7 370.0,241.8 375.2,248.7 373.7,272.0" fill="none" stroke="#233643" stroke-width="1.0" stroke-opacity="0.45"/>
<line x1="372.4" y1="251.3" x2="371.5" y2="266.3" stroke="#263b49" stroke-width="1" stroke-opacity="0.27"/>
<polygon points="370.4,260.3 374.4,262.7 371.6,266.3" fill="#283e4d" fill-opacity="0.62"/>
<polygon points="47.3,240.7 38.9,251.2 39.9,272.0 50.1,272.0 49.1,256.2" fill="#151008" fill-opacity="0.88"/>
<polygon points="47.3,240.7 49.1,256.2 50.1,272.0 56.6,272.0 55.6,253.8" fill="#231b0d" fill-opacity="0.88"/>
<polygon points="47.3,240.7 38.9,251.2 49.1,256.2" fill="#433319" fill-opacity="0.70"/>
<polyline points="39.9,272.0 38.9,251.2 47.3,240.7 55.6,253.8 56.6,272.0" fill="none" stroke="#433319" stroke-width="1.0" stroke-opacity="0.45"/>
<line x1="46.0" y1="255.0" x2="46.8" y2="270.0" stroke="#49381c" stroke-width="1" stroke-opacity="0.27"/>
<polygon points="49.0,263.0 53.5,265.7 50.3,269.8" fill="#4d3a1d" fill-opacity="0.62"/>
<polygon points="86.4,246.6 77.1,258.5 77.5,272.0 88.0,272.0 87.5,264.4" fill="#151008" fill-opacity="0.88"/>
<polygon points="86.4,246.6 87.5,264.4 88.0,272.0 96.8,272.0 96.3,259.0" fill="#231b0d" fill-opacity="0.88"/>
<polygon points="86.4,246.6 87.5,264.4 96.3,259.0" fill="#433319" fill-opacity="0.70"/>
<polyline points="77.5,272.0 77.1,258.5 86.4,246.6 96.3,259.0 96.8,272.0" fill="none" stroke="#433319" stroke-width="1.0" stroke-opacity="0.45"/>
<line x1="84.8" y1="265.0" x2="85.4" y2="280.0" stroke="#49381c" stroke-width="1" stroke-opacity="0.27"/>
<polygon points="83.8,269.0 91.3,273.4 86.1,280.1" fill="#4d3a1d" fill-opacity="0.62"/>
<polygon points="339.8,249.2 327.4,263.7 325.2,272.0 334.5,272.0 336.6,266.9" fill="#0a100c" fill-opacity="0.88"/>
<polygon points="339.8,249.2 336.6,266.9 334.5,272.0 345.0,272.0 347.2,263.5" fill="#111b14" fill-opacity="0.88"/>
<polygon points="339.8,249.2 336.6,266.9 347.2,263.5" fill="#203326" fill-opacity="0.70"/>
<polyline points="325.2,272.0 327.4,263.7 339.8,249.2 347.2,263.5 345.0,272.0" fill="none" stroke="#203326" stroke-width="1.0" stroke-opacity="0.45"/>
<line x1="337.1" y1="270.1" x2="333.9" y2="285.1" stroke="#23382a" stroke-width="1" stroke-opacity="0.27"/>
<polygon points="336.1,286.9 341.2,289.9 337.6,294.6" fill="#243a2c" fill-opacity="0.62"/>
<polygon points="438.9,234.1 434.0,239.1 437.2,272.0 443.3,272.0 440.1,243.7" fill="#120c15" fill-opacity="0.88"/>
<polygon points="438.9,234.1 440.1,243.7 443.3,272.0 448.1,272.0 444.9,242.0" fill="#1e1423" fill-opacity="0.88"/>
<polygon points="438.9,234.1 434.0,239.1 440.1,243.7" fill="#392643" fill-opacity="0.70"/>
<polyline points="437.2,272.0 434.0,239.1 438.9,234.1 444.9,242.0 448.1,272.0" fill="none" stroke="#392643" stroke-width="1.0" stroke-opacity="0.45"/>
<line x1="439.0" y1="245.7" x2="440.6" y2="260.7" stroke="#3f2a49" stroke-width="1" stroke-opacity="0.27"/>
<polygon points="349.3,236.3 342.8,242.9 336.9,272.0 341.1,272.0 347.1,245.8" fill="#0c1015" fill-opacity="0.88"/>
<polygon points="349.3,236.3 347.1,245.8 341.1,272.0 348.0,272.0 353.9,244.2" fill="#141b23" fill-opacity="0.88"/>
<polygon points="349.3,236.3 342.8,242.9 347.1,245.8" fill="#263343" fill-opacity="0.70"/>
<polyline points="336.9,272.0 342.8,242.9 349.3,236.3 353.9,244.2 348.0,272.0" fill="none" stroke="#263343" stroke-width="1.0" stroke-opacity="0.45"/>
<line x1="347.5" y1="251.4" x2="344.5" y2="266.4" stroke="#2a3849" stroke-width="1" stroke-opacity="0.27"/>
<polygon points="442.5,239.5 433.0,253.3 432.7,272.0 441.3,272.0 441.6,256.7" fill="#100d12" fill-opacity="0.88"/>
<polygon points="442.5,239.5 441.6,256.7 441.3,272.0 452.1,272.0 452.4,251.0" fill="#1b161e" fill-opacity="0.88"/>
<polygon points="442.5,239.5 433.0,253.3 441.6,256.7" fill="#332939" fill-opacity="0.70"/>
<polyline points="432.7,272.0 433.0,253.3 442.5,239.5 452.4,251.0 452.1,272.0" fill="none" stroke="#332939" stroke-width="1.0" stroke-opacity="0.45"/>
<line x1="447.2" y1="260.4" x2="447.0" y2="275.4" stroke="#382d3f" stroke-width="1" stroke-opacity="0.27"/>
<polygon points="445.5,261.8 449.4,264.1 446.7,267.6" fill="#3a2f42" fill-opacity="0.62"/>
<polygon points="58.3,241.7 48.2,249.8 42.9,272.0 53.6,272.0 58.9,252.4" fill="#120c05" fill-opacity="0.88"/>
<polygon points="58.3,241.7 58.9,252.4 53.6,272.0 58.3,272.0 63.6,248.0" fill="#1e1408" fill-opacity="0.88"/>
<polygon points="58.3,241.7 58.9,252.4 63.6,248.0" fill="#392610" fill-opacity="0.70"/>
<polyline points="42.9,272.0 48.2,249.8 58.3,241.7 63.6,248.0 58.3,272.0" fill="none" stroke="#392610" stroke-width="1.0" stroke-opacity="0.45"/>
<line x1="54.6" y1="255.0" x2="51.3" y2="270.0" stroke="#3f2a11" stroke-width="1" stroke-opacity="0.27"/>
<polygon points="52.0,258.4 57.8,261.9 53.7,267.2" fill="#422c12" fill-opacity="0.62"/>
<polygon points="392.5,243.3 383.7,252.7 385.5,272.0 396.8,272.0 395.0,257.5" fill="#0a100c" fill-opacity="0.88"/>
<polygon points="392.5,243.3 395.0,257.5 396.8,272.0 403.6,272.0 401.8,252.0" fill="#111b14" fill-opacity="0.88"/>
<polygon points="392.5,243.3 383.7,252.7 395.0,257.5" fill="#203326" fill-opacity="0.70"/>
<polyline points="385.5,272.0 383.7,252.7 392.5,243.3 401.8,252.0 403.6,272.0" fill="none" stroke="#203326" stroke-width="1.0" stroke-opacity="0.45"/>
<line x1="392.0" y1="260.0" x2="393.4" y2="275.0" stroke="#23382a" stroke-width="1" stroke-opacity="0.27"/>
<polygon points="428.3,247.8 421.1,258.1 419.3,272.0 425.1,272.0 426.9,260.2" fill="#120c15" fill-opacity="0.88"/>
<polygon points="428.3,247.8 426.9,260.2 425.1,272.0 431.7,272.0 433.6,256.4" fill="#1e1423" fill-opacity="0.88"/>
<polygon points="428.3,247.8 421.1,258.1 426.9,260.2" fill="#392643" fill-opacity="0.70"/>
<polyline points="419.3,272.0 421.1,258.1 428.3,247.8 433.6,256.4 431.7,272.0" fill="none" stroke="#392643" stroke-width="1.0" stroke-opacity="0.45"/>
<line x1="423.7" y1="259.4" x2="421.9" y2="274.4" stroke="#3f2a49" stroke-width="1" stroke-opacity="0.27"/>
<polygon points="428.5,263.3 432.2,265.5 429.6,268.7" fill="#422c4d" fill-opacity="0.62"/>
<polygon points="242.1,239.6 234.0,250.4 235.3,272.0 243.1,272.0 241.8,256.8" fill="#0e180b" fill-opacity="0.88"/>
<polygon points="242.1,239.6 241.8,256.8 243.1,272.0 253.9,272.0 252.6,250.7" fill="#172812" fill-opacity="0.88"/>
<polygon points="242.1,239.6 241.8,256.8 252.6,250.7" fill="#2c4c23" fill-opacity="0.70"/>
<polyline points="235.3,272.0 234.0,250.4 242.1,239.6 252.6,250.7 253.9,272.0" fill="none" stroke="#2c4c23" stroke-width="1.0" stroke-opacity="0.45"/>
<line x1="238.9" y1="260.3" x2="239.9" y2="275.3" stroke="#315426" stroke-width="1" stroke-opacity="0.27"/>
<polygon points="241.8,262.7 246.5,265.5 243.2,269.8" fill="#335828" fill-opacity="0.62"/>
<polygon points="247.1,235.0 241.3,245.3 242.6,272.0 249.8,272.0 248.5,246.4" fill="#0a1408" fill-opacity="0.88"/>
<polygon points="247.1,235.0 248.5,246.4 249.8,272.0 254.0,272.0 252.7,244.0" fill="#11220d" fill-opacity="0.88"/>
<polygon points="247.1,235.0 241.3,245.3 248.5,246.4" fill="#204019" fill-opacity="0.70"/>
<polyline points="242.6,272.0 241.3,245.3 247.1,235.0 252.7,244.0 254.0,272.0" fill="none" stroke="#204019" stroke-width="1.0" stroke-opacity="0.45"/>
<line x1="247.5" y1="249.9" x2="248.2" y2="264.9" stroke="#23461c" stroke-width="1" stroke-opacity="0.27"/>
<polygon points="248.7,254.1 253.0,256.7 250.0,260.7" fill="#24491d" fill-opacity="0.62"/>
<polygon points="43.9,244.7 34.7,254.3 31.4,272.0 39.1,272.0 42.3,258.9" fill="#0f0d06" fill-opacity="0.88"/>
<polygon points="43.9,244.7 42.3,258.9 39.1,272.0 45.1,272.0 48.4,257.2" fill="#19160a" fill-opacity="0.88"/>
<polygon points="43.9,244.7 34.7,254.3 42.3,258.9" fill="#302913" fill-opacity="0.70"/>
<polyline points="31.4,272.0 34.7,254.3 43.9,244.7 48.4,257.2 45.1,272.0" fill="none" stroke="#302913" stroke-width="1.0" stroke-opacity="0.45"/>
<line x1="40.6" y1="264.1" x2="37.6" y2="279.1" stroke="#342d15" stroke-width="1" stroke-opacity="0.27"/>
<polygon points="42.6,265.9 47.9,269.1 44.2,273.9" fill="#372f16" fill-opacity="0.62"/>
<polygon points="146.4,230.2 139.7,237.8 141.1,272.0 149.5,272.0 148.1,241.0" fill="#0d170a" fill-opacity="0.88"/>
<polygon points="146.4,230.2 148.1,241.0 149.5,272.0 153.9,272.0 152.5,239.7" fill="#162711" fill-opacity="0.88"/>
<polygon points="146.4,230.2 148.1,241.0 152.5,239.7" fill="#294920" fill-opacity="0.70"/>
<polyline points="141.1,272.0 139.7,237.8 146.4,230.2 152.5,239.7 153.9,272.0" fill="none" stroke="#294920" stroke-width="1.0" stroke-opacity="0.45"/>
<line x1="147.6" y1="240.8" x2="148.2" y2="255.8" stroke="#2d5023" stroke-width="1" stroke-opacity="0.27"/>
<polygon points="53.6,248.4 41.2,263.4 38.7,272.0 47.6,272.0 50.1,266.2" fill="#151008" fill-opacity="0.88"/>
<polygon points="53.6,248.4 50.1,266.2 47.6,272.0 57.5,272.0 60.0,261.3" fill="#231b0d" fill-opacity="0.88"/>
<polygon points="53.6,248.4 41.2,263.4 50.1,266.2" fill="#433319" fill-opacity="0.70"/>
<polyline points="38.7,272.0 41.2,263.4 53.6,248.4 60.0,261.3 57.5,272.0" fill="none" stroke="#433319" stroke-width="1.0" stroke-opacity="0.45"/>
<line x1="51.3" y1="264.9" x2="47.7" y2="279.9" stroke="#49381c" stroke-width="1" stroke-opacity="0.27"/>
<polygon points="45.4,269.8 51.8,273.7 47.3,279.5" fill="#4d3a1d" fill-opacity="0.62"/>
<polygon points="323.2,232.2 316.9,237.4 322.9,272.0 331.3,272.0 325.4,242.2" fill="#0a1408" fill-opacity="0.88"/>
<polygon points="323.2,232.2 325.4,242.2 331.3,272.0 336.9,272.0 330.9,237.5" fill="#11220d" fill-opacity="0.88"/>
<polygon points="323.2,232.2 325.4,242.2 330.9,237.5" fill="#204019" fill-opacity="0.70"/>
<polyline points="322.9,272.0 316.9,237.4 323.2,232.2 330.9,237.5 336.9,272.0" fill="none" stroke="#204019" stroke-width="1.0" stroke-opacity="0.45"/>
<line x1="327.1" y1="241.1" x2="329.8" y2="256.1" stroke="#23461c" stroke-width="1" stroke-opacity="0.27"/>
<polygon points="248.5,229.9 244.3,233.5 250.1,272.0 253.9,272.0 248.0,237.8" fill="#0e180b" fill-opacity="0.88"/>
<polygon points="248.5,229.9 248.0,237.8 253.9,272.0 261.2,272.0 255.3,234.2" fill="#172812" fill-opacity="0.88"/>
<polygon points="248.5,229.9 244.3,233.5 248.0,237.8" fill="#2c4c23" fill-opacity="0.70"/>
<polyline points="250.1,272.0 244.3,233.5 248.5,229.9 255.3,234.2 261.2,272.0" fill="none" stroke="#2c4c23" stroke-width="1.0" stroke-opacity="0.45"/>
<line x1="252.7" y1="241.9" x2="255.1" y2="256.9" stroke="#315426" stroke-width="1" stroke-opacity="0.27"/>
<polygon points="-0.9,238.2 -6.4,244.7 -2.9,272.0 4.9,272.0 1.4,247.6" fill="#0f0d06" fill-opacity="0.88"/>
<polygon points="-0.9,238.2 1.4,247.6 4.9,272.0 8.5,272.0 5.1,245.5" fill="#19160a" fill-opacity="0.88"/>
<polygon points="-0.9,238.2 -6.4,244.7 1.4,247.6" fill="#302913" fill-opacity="0.70"/>
<polyline points="-2.9,272.0 -6.4,244.7 -0.9,238.2 5.1,245.5 8.5,272.0" fill="none" stroke="#302913" stroke-width="1.0" stroke-opacity="0.45"/>
<line x1="-3.9" y1="249.5" x2="-2.0" y2="264.5" stroke="#342d15" stroke-width="1" stroke-opacity="0.27"/>
<polygon points="367.0,242.5 359.4,250.6 360.0,272.0 369.2,272.0 368.6,255.5" fill="#0c1015" fill-opacity="0.88"/>
<polygon points="367.0,242.5 368.6,255.5 369.2,272.0 374.6,272.0 374.0,252.2" fill="#141b23" fill-opacity="0.88"/>
<polygon points="367.0,242.5 368.6,255.5 374.0,252.2" fill="#263343" fill-opacity="0.70"/>
<polyline points="360.0,272.0 359.4,250.6 367.0,242.5 374.0,252.2 374.6,272.0" fill="none" stroke="#263343" stroke-width="1.0" stroke-opacity="0.45"/>
<line x1="369.7" y1="255.3" x2="370.2" y2="270.3" stroke="#2a3849" stroke-width="1" stroke-opacity="0.27"/>
<polygon points="393.3,233.7 389.2,242.5 394.8,272.0 398.9,272.0 393.3,245.2" fill="#0b1115" fill-opacity="0.88"/>
<polygon points="393.3,233.7 393.3,245.2 398.9,272.0 407.4,272.0 401.9,240.8" fill="#121c23" fill-opacity="0.88"/>
<polygon points="393.3,233.7 393.3,245.2 401.9,240.8" fill="#233643" fill-opacity="0.70"/>
<polyline points="394.8,272.0 389.2,242.5 393.3,233.7 401.9,240.8 407.4,272.0" fill="none" stroke="#233643" stroke-width="1.0" stroke-opacity="0.45"/>
<line x1="393.0" y1="245.0" x2="395.7" y2="260.0" stroke="#263b49" stroke-width="1" stroke-opacity="0.27"/>
<polygon points="397.8,258.4 402.1,261.0 399.1,264.9" fill="#283e4d" fill-opacity="0.62"/>
<polygon points="125.4,232.0 119.6,242.5 124.8,272.0 131.6,272.0 126.4,246.4" fill="#091107" fill-opacity="0.88"/>
<polygon points="125.4,232.0 126.4,246.4 131.6,272.0 140.7,272.0 135.4,242.0" fill="#0f1c0b" fill-opacity="0.88"/>
<polygon points="125.4,232.0 119.6,242.5 126.4,246.4" fill="#1c3616" fill-opacity="0.70"/>
<polyline points="124.8,272.0 119.6,242.5 125.4,232.0 135.4,242.0 140.7,272.0" fill="none" stroke="#1c3616" stroke-width="1.0" stroke-opacity="0.45"/>
<line x1="126.2" y1="249.3" x2="128.8" y2="264.3" stroke="#1f3b18" stroke-width="1" stroke-opacity="0.27"/>
<polygon points="439.0,249.0 428.1,259.5 425.0,272.0 431.9,272.0 434.9,263.7" fill="#0d0a10" fill-opacity="0.88"/>
<polygon points="439.0,249.0 434.9,263.7 431.9,272.0 443.4,272.0 446.4,258.0" fill="#16111b" fill-opacity="0.88"/>
<polygon points="439.0,249.0 434.9,263.7 446.4,258.0" fill="#292033" fill-opacity="0.70"/>
<polyline points="425.0,272.0 428.1,259.5 439.0,249.0 446.4,258.0 443.4,272.0" fill="none" stroke="#292033" stroke-width="1.0" stroke-opacity="0.45"/>
<line x1="439.8" y1="263.1" x2="436.2" y2="278.1" stroke="#2d2338" stroke-width="1" stroke-opacity="0.27"/>
<polygon points="431.4,269.5 436.3,272.4 432.9,276.8" fill="#2f243a" fill-opacity="0.62"/>
<polygon points="369.4,233.9 359.6,241.7 352.1,272.0 359.6,272.0 367.2,245.5" fill="#0a100c" fill-opacity="0.88"/>
<polygon points="369.4,233.9 367.2,245.5 359.6,272.0 368.3,272.0 375.8,241.9" fill="#111b14" fill-opacity="0.88"/>
<polygon points="369.4,233.9 359.6,241.7 367.2,245.5" fill="#203326" fill-opacity="0.70"/>
<polyline points="352.1,272.0 359.6,241.7 369.4,233.9 375.8,241.9 368.3,272.0" fill="none" stroke="#203326" stroke-width="1.0" stroke-opacity="0.45"/>
<line x1="365.2" y1="246.5" x2="361.5" y2="261.5" stroke="#23382a" stroke-width="1" stroke-opacity="0.27"/>
<polygon points="366.2,247.9 369.7,250.0 367.3,253.1" fill="#243a2c" fill-opacity="0.62"/>
<polygon points="229.3,223.1 220.0,233.1 215.9,272.0 223.1,272.0 227.2,237.4" fill="#0e180b" fill-opacity="0.88"/>
<polygon points="229.3,223.1 227.2,237.4 223.1,272.0 233.2,272.0 237.3,232.6" fill="#172812" fill-opacity="0.88"/>
<polygon points="229.3,223.1 220.0,233.1 227.2,237.4" fill="#2c4c23" fill-opacity="0.70"/>
<polyline points="215.9,272.0 220.0,233.1 229.3,223.1 237.3,232.6 233.2,272.0" fill="none" stroke="#2c4c23" stroke-width="1.0" stroke-opacity="0.45"/>
<line x1="230.2" y1="242.0" x2="228.6" y2="257.0" stroke="#315426" stroke-width="1" stroke-opacity="0.27"/>
<polygon points="225.4,241.0 230.1,243.8 226.8,248.1" fill="#335828" fill-opacity="0.62"/>
<polygon points="286.4,223.6 281.7,230.2 283.1,272.0 286.5,272.0 285.1,231.9" fill="#091107" fill-opacity="0.88"/>
<polygon points="286.4,223.6 285.1,231.9 286.5,272.0 293.9,272.0 292.6,228.5" fill="#0f1c0b" fill-opacity="0.88"/>
<polygon points="286.4,223.6 281.7,230.2 285.1,231.9" fill="#1c3616" fill-opacity="0.70"/>
<polyline points="283.1,272.0 281.7,230.2 286.4,223.6 292.6,228.5 293.9,272.0" fill="none" stroke="#1c3616" stroke-width="1.0" stroke-opacity="0.45"/>
<line x1="286.3" y1="237.0" x2="286.8" y2="252.0" stroke="#1f3b18" stroke-width="1" stroke-opacity="0.27"/>
<polygon points="95.8,237.5 89.4,245.6 93.0,272.0 99.7,272.0 96.0,249.3" fill="#0f0d06" fill-opacity="0.88"/>
<polygon points="95.8,237.5 96.0,249.3 99.7,272.0 108.9,272.0 105.2,243.8" fill="#19160a" fill-opacity="0.88"/>
<polygon points="95.8,237.5 89.4,245.6 96.0,249.3" fill="#302913" fill-opacity="0.70"/>
<polyline points="93.0,272.0 89.4,245.6 95.8,237.5 105.2,243.8 108.9,272.0" fill="none" stroke="#302913" stroke-width="1.0" stroke-opacity="0.45"/>
<line x1="100.9" y1="250.8" x2="103.0" y2="265.8" stroke="#342d15" stroke-width="1" stroke-opacity="0.27"/>
<polygon points="176.9,232.7 168.2,244.1 171.3,272.0 181.4,272.0 178.2,249.3" fill="#0e180b" fill-opacity="0.88"/>
<polygon points="176.9,232.7 178.2,249.3 181.4,272.0 191.2,272.0 188.1,244.9" fill="#172812" fill-opacity="0.88"/>
<polygon points="176.9,232.7 178.2,249.3 188.1,244.9" fill="#2c4c23" fill-opacity="0.70"/>
<polyline points="171.3,272.0 168.2,244.1 176.9,232.7 188.1,244.9 191.2,272.0" fill="none" stroke="#2c4c23" stroke-width="1.0" stroke-opacity="0.45"/>
<line x1="177.4" y1="247.2" x2="179.1" y2="262.2" stroke="#315426" stroke-width="1" stroke-opacity="0.27"/>
<polygon points="323.3,222.2 317.5,228.4 326.9,272.0 334.0,272.0 324.6,232.3" fill="#091107" fill-opacity="0.88"/>
<polygon points="323.3,222.2 324.6,232.3 334.0,272.0 341.3,272.0 332.0,230.3" fill="#0f1c0b" fill-opacity="0.88"/>
<polygon points="323.3,222.2 324.6,232.3 332.0,230.3" fill="#1c3616" fill-opacity="0.70"/>
<polyline points="326.9,272.0 317.5,228.4 323.3,222.2 332.0,230.3 341.3,272.0" fill="none" stroke="#1c3616" stroke-width="1.0" stroke-opacity="0.45"/>
<line x1="323.3" y1="234.1" x2="326.5" y2="249.1" stroke="#1f3b18" stroke-width="1" stroke-opacity="0.27"/>
<polygon points="327.5,251.4 331.5,253.8 328.7,257.4" fill="#213e19" fill-opacity="0.62"/>
<polygon points="36.7,244.1 31.7,248.9 30.9,272.0 34.9,272.0 35.7,251.6" fill="#120c05" fill-opacity="0.88"/>
<polygon points="36.7,244.1 35.7,251.6 34.9,272.0 41.1,272.0 42.0,250.5" fill="#1e1408" fill-opacity="0.88"/>
<polygon points="36.7,244.1 35.7,251.6 42.0,250.5" fill="#392610" fill-opacity="0.70"/>
<polyline points="30.9,272.0 31.7,248.9 36.7,244.1 42.0,250.5 41.1,272.0" fill="none" stroke="#392610" stroke-width="1.0" stroke-opacity="0.45"/>
<line x1="35.5" y1="258.9" x2="35.0" y2="273.9" stroke="#3f2a11" stroke-width="1" stroke-opacity="0.27"/>
<polygon points="246.0,225.3 239.2,232.0 237.6,272.0 244.2,272.0 245.8,236.0" fill="#0d170a" fill-opacity="0.88"/>
<polygon points="246.0,225.3 245.8,236.0 244.2,272.0 250.6,272.0 252.2,234.2" fill="#162711" fill-opacity="0.88"/>
<polygon points="246.0,225.3 245.8,236.0 252.2,234.2" fill="#294920" fill-opacity="0.70"/>
<polyline points="237.6,272.0 239.2,232.0 246.0,225.3 252.2,234.2 250.6,272.0" fill="none" stroke="#294920" stroke-width="1.0" stroke-opacity="0.45"/>
<line x1="247.4" y1="239.0" x2="246.8" y2="254.0" stroke="#2d5023" stroke-width="1" stroke-opacity="0.27"/>
<polygon points="247.2,252.2 251.4,254.7 248.5,258.5" fill="#2f5424" fill-opacity="0.62"/>
<polygon points="230.0,242.2 222.2,247.6 217.0,272.0 224.9,272.0 230.1,251.0" fill="#0a1408" fill-opacity="0.88"/>
<polygon points="230.0,242.2 230.1,251.0 224.9,272.0 228.8,272.0 234.1,246.9" fill="#11220d" fill-opacity="0.88"/>
<polygon points="230.0,242.2 222.2,247.6 230.1,251.0" fill="#204019" fill-opacity="0.70"/>
<polyline points="217.0,272.0 222.2,247.6 230.0,242.2 234.1,246.9 228.8,272.0" fill="none" stroke="#204019" stroke-width="1.0" stroke-opacity="0.45"/>
<line x1="224.9" y1="254.0" x2="221.6" y2="269.0" stroke="#23461c" stroke-width="1" stroke-opacity="0.27"/>
<polygon points="225.3,270.0 227.8,271.6 226.1,273.8" fill="#24491d" fill-opacity="0.62"/>
</g>
<line x1="212.2" y1="234.0" x2="210.3" y2="239.5" stroke="#48d038" stroke-width="1.2" stroke-opacity="0.6"/>
<line x1="187.4" y1="245.0" x2="186.4" y2="249.7" stroke="#48d038" stroke-width="1.2" stroke-opacity="0.6"/>
<line x1="179.7" y1="235.9" x2="180.1" y2="241.4" stroke="#48d038" stroke-width="1.2" stroke-opacity="0.6"/>
<line x1="265.9" y1="227.8" x2="267.0" y2="235.4" stroke="#48d038" stroke-width="1.2" stroke-opacity="0.6"/>
<line x1="171.6" y1="247.0" x2="171.0" y2="254.3" stroke="#48d038" stroke-width="1.2" stroke-opacity="0.6"/>
<line x1="247.6" y1="242.6" x2="247.3" y2="246.9" stroke="#48d038" stroke-width="1.2" stroke-opacity="0.6"/>
<line x1="281.6" y1="250.9" x2="281.5" y2="258.4" stroke="#48d038" stroke-width="1.2" stroke-opacity="0.6"/>
<line x1="188.3" y1="252.4" x2="189.4" y2="257.7" stroke="#48d038" stroke-width="1.2" stroke-opacity="0.6"/>
<line x1="287.1" y1="255.5" x2="286.2" y2="265.5" stroke="#48d038" stroke-width="1.2" stroke-opacity="0.6"/>
<line x1="227.0" y1="226.4" x2="228.3" y2="232.5" stroke="#48d038" stroke-width="1.2" stroke-opacity="0.6"/>
<line x1="271.8" y1="241.0" x2="269.5" y2="248.2" stroke="#48d038" stroke-width="1.2" stroke-opacity="0.6"/>
<line x1="293.2" y1="237.2" x2="293.4" y2="246.4" stroke="#48d038" stroke-width="1.2" stroke-opacity="0.6"/>
<line x1="220.4" y1="237.7" x2="220.9" y2="246.7" stroke="#48d038" stroke-width="1.2" stroke-opacity="0.6"/>
<line x1="176.6" y1="223.4" x2="178.1" y2="230.7" stroke="#48d038" stroke-width="1.2" stroke-opacity="0.6"/>
<line x1="194.5" y1="252.1" x2="196.8" y2="259.4" stroke="#48d038" stroke-width="1.2" stroke-opacity="0.6"/>
<line x1="317.9" y1="250.1" x2="319.4" y2="255.8" stroke="#48d038" stroke-width="1.2" stroke-opacity="0.6"/>
<line x1="141.9" y1="244.4" x2="143.4" y2="250.5" stroke="#48d038" stroke-width="1.2" stroke-opacity="0.6"/>
<line x1="226.2" y1="240.4" x2="224.7" y2="248.6" stroke="#48d038" stroke-width="1.2" stroke-opacity="0.6"/>
<line x1="241.3" y1="233.9" x2="238.9" y2="241.2" stroke="#48d038" stroke-width="1.2" stroke-opacity="0.6"/>
<line x1="197.5" y1="246.1" x2="195.6" y2="252.5" stroke="#48d038" stroke-width="1.2" stroke-opacity="0.6"/>
<line x1="175.3" y1="234.7" x2="175.8" y2="239.3" stroke="#48d038" stroke-width="1.2" stroke-opacity="0.6"/>
<line x1="149.9" y1="237.4" x2="148.1" y2="244.4" stroke="#48d038" stroke-width="1.2" stroke-opacity="0.6"/>
<line x1="170.1" y1="223.6" x2="170.3" y2="233.2" stroke="#48d038" stroke-width="1.2" stroke-opacity="0.6"/>
<line x1="296.3" y1="238.6" x2="295.7" y2="243.0" stroke="#48d038" stroke-width="1.2" stroke-opacity="0.6"/>
<line x1="189.7" y1="231.3" x2="192.4" y2="236.0" stroke="#48d038" stroke-width="1.2" stroke-opacity="0.6"/>
<line x1="310.6" y1="237.2" x2="310.2" y2="242.7" stroke="#48d038" stroke-width="1.2" stroke-opacity="0.6"/>
<line x1="313.3" y1="226.7" x2="313.7" y2="233.8" stroke="#48d038" stroke-width="1.2" stroke-opacity="0.6"/>
<line x1="175.9" y1="228.0" x2="178.8" y2="236.8" stroke="#48d038" stroke-width="1.2" stroke-opacity="0.6"/>
<line x1="272.0" y1="252.5" x2="269.6" y2="260.7" stroke="#48d038" stroke-width="1.2" stroke-opacity="0.6"/>
<line x1="275.1" y1="228.1" x2="274.8" y2="238.0" stroke="#48d038" stroke-width="1.2" stroke-opacity="0.6"/>
<line x1="198.8" y1="247.4" x2="196.8" y2="255.4" stroke="#48d038" stroke-width="1.2" stroke-opacity="0.6"/>
<line x1="188.5" y1="238.3" x2="187.7" y2="247.5" stroke="#48d038" stroke-width="1.2" stroke-opacity="0.6"/>
<line x1="274.1" y1="238.1" x2="275.2" y2="244.7" stroke="#48d038" stroke-width="1.2" stroke-opacity="0.6"/>
<line x1="284.8" y1="229.3" x2="285.0" y2="236.8" stroke="#48d038" stroke-width="1.2" stroke-opacity="0.6"/>
<line x1="209.9" y1="221.7" x2="207.9" y2="229.5" stroke="#48d038" stroke-width="1.2" stroke-opacity="0.6"/>
<line x1="178.0" y1="247.3" x2="178.1" y2="257.0" stroke="#48d038" stroke-width="1.2" stroke-opacity="0.6"/>
<line x1="292.6" y1="246.2" x2="291.8" y2="250.4" stroke="#48d038" stroke-width="1.2" stroke-opacity="0.6"/>
<line x1="240.2" y1="246.8" x2="242.7" y2="252.1" stroke="#48d038" stroke-width="1.2" stroke-opacity="0.6"/>
<line x1="168.5" y1="255.3" x2="170.0" y2="262.2" stroke="#48d038" stroke-width="1.2" stroke-opacity="0.6"/>
<line x1="272.9" y1="225.4" x2="273.2" y2="233.4" stroke="#48d038" stroke-width="1.2" stroke-opacity="0.6"/>
<line x1="94.4" y1="235.9" x2="93.0" y2="242.4" stroke="#40c030" stroke-width="1.2" stroke-opacity="0.5"/>
<line x1="126.7" y1="235.3" x2="124.7" y2="239.6" stroke="#40c030" stroke-width="1.2" stroke-opacity="0.5"/>
<line x1="115.3" y1="241.4" x2="115.1" y2="249.4" stroke="#40c030" stroke-width="1.2" stroke-opacity="0.5"/>
<line x1="95.3" y1="238.3" x2="96.1" y2="242.3" stroke="#40c030" stroke-width="1.2" stroke-opacity="0.5"/>
<line x1="57.4" y1="248.8" x2="56.1" y2="252.9" stroke="#40c030" stroke-width="1.2" stroke-opacity="0.5"/>
<line x1="84.6" y1="239.9" x2="86.5" y2="244.3" stroke="#40c030" stroke-width="1.2" stroke-opacity="0.5"/>
<line x1="117.3" y1="241.3" x2="118.5" y2="247.1" stroke="#40c030" stroke-width="1.2" stroke-opacity="0.5"/>
<line x1="101.8" y1="239.8" x2="100.7" y2="245.6" stroke="#40c030" stroke-width="1.2" stroke-opacity="0.5"/>
<line x1="434.0" y1="239.0" x2="432.9" y2="244.6" stroke="#30b030" stroke-width="1.1" stroke-opacity="0.5"/>
<line x1="381.4" y1="255.5" x2="379.9" y2="262.2" stroke="#30b030" stroke-width="1.1" stroke-opacity="0.5"/>
<line x1="367.7" y1="230.6" x2="365.8" y2="236.0" stroke="#30b030" stroke-width="1.1" stroke-opacity="0.5"/>
<line x1="389.0" y1="243.3" x2="389.6" y2="251.2" stroke="#a040a0" stroke-width="1.1" stroke-opacity="0.5"/>
<line x1="416.1" y1="249.1" x2="416.2" y2="254.8" stroke="#a040a0" stroke-width="1.1" stroke-opacity="0.5"/>
<line x1="434.0" y1="234.6" x2="433.8" y2="240.7" stroke="#a040a0" stroke-width="1.1" stroke-opacity="0.5"/>
<line x1="450.5" y1="245.1" x2="451.0" y2="250.9" stroke="#30b030" stroke-width="1.1" stroke-opacity="0.5"/>
<line x1="370.1" y1="243.6" x2="369.0" y2="249.7" stroke="#a040a0" stroke-width="1.1" stroke-opacity="0.5"/>
<line x1="345.9" y1="243.0" x2="345.8" y2="248.0" stroke="#a040a0" stroke-width="1.1" stroke-opacity="0.5"/>
<line x1="332.6" y1="230.6" x2="333.1" y2="234.8" stroke="#3090b0" stroke-width="1.1" stroke-opacity="0.5"/>
<line x1="443.0" y1="253.5" x2="441.2" y2="260.2" stroke="#a040a0" stroke-width="1.1" stroke-opacity="0.5"/>
<line x1="436.2" y1="242.8" x2="437.3" y2="250.0" stroke="#a040a0" stroke-width="1.1" stroke-opacity="0.5"/>
<rect x="0" y="247" width="467" height="60" fill="url(#ground)"/>
<rect x="0" y="260" width="467" height="47" filter="url(#noise)" opacity="0.12"/>
</g>
<g fill="#fff">
<circle cx="11.5" cy="11.5" r="4.5"/>
<circle cx="114.3" cy="11.5" r="5.7"/>
<circle cx="201.7" cy="12" r="4.4"/>
<circle cx="265.9" cy="11.6" r="4.4"/>
<circle cx="338.5" cy="11.6" r="5.8"/>
<circle cx="361.2" cy="11.6" r="5.8"/>
<circle cx="383.8" cy="11.6" r="5.8"/>
<circle cx="406.2" cy="11.6" r="5.8"/>
<circle cx="456.1" cy="11.6" r="4.4"/>
<circle cx="456.1" cy="151" r="4.4"/>
<circle cx="11.2" cy="150.7" r="4.3"/>
<circle cx="11.2" cy="295.2" r="4.5"/>
<circle cx="233.8" cy="295.2" r="4.5"/>
<circle cx="456.4" cy="295.6" r="4.5"/>
<rect x="47.1" y="17.2" width="39.1" height="21.4" rx="2"/>
<circle cx="146.7" cy="43.2" r="21.5"/>
<circle cx="82.3" cy="93.1" r="21.5"/>
<circle cx="135.2" cy="94.3" r="21.5"/>
<circle cx="183.4" cy="116.1" r="21.5"/>
<circle cx="237.5" cy="41.2" r="21.5"/>
<circle cx="279.9" cy="73.5" r="21.5"/>
<circle cx="333" cy="74.3" r="21.5"/>
<circle cx="385.6" cy="79.6" r="21.5"/>
<circle cx="231.7" cy="94.4" r="21.5"/>
<circle cx="275.2" cy="125.7" r="21.5"/>
<circle cx="328.4" cy="126.9" r="21.5"/>
<circle cx="380.3" cy="132.1" r="21.5"/>
<circle cx="227" cy="146.6" r="21.5"/>
<circle cx="269.7" cy="177.1" r="21.5"/>
<circle cx="156.8" cy="198.1" r="21.3"/>
<circle cx="207.4" cy="211.4" r="24.6"/>
</g>
<rect x="0.5" y="0.5" width="466" height="306" fill="none" stroke="#ffe600" stroke-width="1" stroke-dasharray="4 4"/>
<rect x="0.5" y="0.5" width="466" height="306" fill="none" stroke="#1a1a30" stroke-width="1" stroke-dasharray="4 4" stroke-dashoffset="4"/>
</svg>
<div id="menu" class="abs">
<div class="it" style="top:2px"><svg class="ic" width="14" height="14" viewBox="0 0 14 14" style="position:absolute;left:3px;top:2px"><path d="M3.5 5.5 V12.5 H11.5 V5 L9 2.5 H7" fill="none" stroke="#b4b4b4" stroke-width="1.3"/><path d="M3.5 1 V6 M1 3.5 H6" stroke="#c8c8c8" stroke-width="1.6"/></svg><span class="f" style="left:20px;--w:57"><u>新しい画像</u><i>(N)...</i></span><span class="f k" style="left:167px;--w:25">Ctrl+N</span></div>
<div class="it" style="top:20px"><svg width="7" height="10" style="position:absolute;left:188px;top:4px"><path d="M1 0.5 L5.5 5 L1 9.5" fill="none" stroke="#d8d8d8" stroke-width="1.3"/></svg><span class="f" style="left:20px;--w:51"><u>画像の生成</u><i>(T)</i></span></div>
<div class="it" style="top:38px"><svg class="ic" width="14" height="14" viewBox="0 0 14 14" style="position:absolute;left:3px;top:2px"><rect x="2" y="1.5" width="10" height="9.5" fill="none" stroke="#b0b0b0" stroke-width="1.3"/><rect x="4" y="3.5" width="6" height="3" fill="#8a8a8a"/><rect x="2" y="8" width="10" height="3" fill="#b8b8b8"/></svg><span class="f" style="left:20px;--w:67"><u>開く</u>/<u>インポート</u><i>(O)...</i></span><span class="f k" style="left:167px;--w:25">Ctrl+O</span></div>
<div class="it" style="top:56px"><svg class="ic" width="14" height="14" viewBox="0 0 14 14" style="position:absolute;left:3px;top:2px"><path d="M4 4.5 H13 L11 6 H2 Z" fill="#9a9a9a"/><path d="M4 7.5 H13 L11 9.5 H2 Z" fill="#cfcfcf"/><path d="M4 11 H13 L11 12.5 H2 Z" fill="#8a8a8a"/></svg><span class="f" style="left:20px;--w:74"><u>レイヤーとして開く</u><i>(E)...</i></span><span class="f k" style="left:150px;--w:42">Ctrl+Alt+O</span></div>
<div class="it" style="top:74px"><svg class="ic" width="14" height="14" viewBox="0 0 14 14" style="position:absolute;left:3px;top:2px"><circle cx="7" cy="8" r="5" fill="none" stroke="#b8b8b8" stroke-width="1.4"/><path d="M5 5 L8 6 L6 9 L8 11" stroke="#b0b0b0" stroke-width="1.2" fill="none"/></svg><span class="f" style="left:20px;--w:53"><u>場所を開く</u><i>(L)...</i></span></div>
<div class="it" style="top:92px"><svg width="7" height="10" style="position:absolute;left:188px;top:4px"><path d="M1 0.5 L5.5 5 L1 9.5" fill="none" stroke="#d8d8d8" stroke-width="1.3"/></svg><span class="f" style="left:20px;--w:75"><u>最近開いたファイル</u><i>(R)</i></span></div>
<div class="sep" style="top:115px"></div>
<div class="it" style="top:122px"><svg class="ic" width="14" height="14" viewBox="0 0 14 14" style="position:absolute;left:3px;top:2px"><path d="M7 1 V7 M4.5 4.5 L7 7 L9.5 4.5" stroke="#bdbdbd" stroke-width="1.5" fill="none"/><rect x="2.5" y="8.5" width="9" height="4" fill="#bdbdbd"/></svg><span class="f" style="left:20px;--w:27"><u>保存</u><i>(S)</i></span><span class="f k" style="left:169px;--w:24">Ctrl+S</span></div>
<div class="it" style="top:140px"><svg class="ic" width="14" height="14" viewBox="0 0 14 14" style="position:absolute;left:3px;top:2px"><ellipse cx="7" cy="4.5" rx="4.5" ry="3" fill="none" stroke="#bdbdbd" stroke-width="1.4"/><rect x="2.5" y="8.5" width="9" height="4" fill="#bdbdbd"/></svg><span class="f" style="left:20px;--w:81"><u>名前を付けて保存</u><i>(A)...</i></span><span class="f k" style="left:146px;--w:47">Shift+Ctrl+S</span></div>
<div class="it" style="top:158px"><span class="f" style="left:20px;--w:59"><u>コピーを保存</u><i>(Y)...</i></span></div>
<div class="it" style="top:176px"><svg class="ic" width="14" height="14" viewBox="0 0 14 14" style="position:absolute;left:3px;top:2px"><path d="M5 5 A2.5 2.5 0 0 1 2 2.5" stroke="#bdbdbd" stroke-width="1.2" fill="none"/><rect x="5" y="6" width="7" height="6.5" fill="none" stroke="#c0c0c0" stroke-width="1.3"/></svg><span class="f" style="left:20px;--w:27"><u>復帰</u><i>(V)</i></span></div>
<div class="sep" style="top:199px"></div>
<div class="it" style="top:206px"><span class="f" style="left:20px;--w:55"><u>エクスポート</u><i>(X)...</i></span><span class="f k" style="left:169px;--w:24">Ctrl+E</span></div>
<div class="it hl" style="top:224px"><span class="f" style="left:20px;--w:100"><u>名前を付けてエクスポート</u><i>(X)...</i></span><span class="f k" style="left:146px;--w:47">Shift+Ctrl+E</span></div>
<div class="it" style="top:242px"><span class="f" style="left:20px;--w:78"><u>テンプレートの作成</u><i>(T)...</i></span></div>
<div class="sep" style="top:265px"></div>
<div class="it" style="top:272px"><svg class="ic" width="14" height="14" viewBox="0 0 14 14" style="position:absolute;left:3px;top:2px"><rect x="3" y="1.5" width="8" height="10.5" fill="#e8e8e8"/><path d="M5 5 L9 9 M9 5 L5 9" stroke="#e02020" stroke-width="1.3"/></svg><span class="f" style="left:20px;top:0;font-size:10.5px;--w:48">Page Setup...</span></div>
<div class="it" style="top:290px"><svg class="ic" width="14" height="14" viewBox="0 0 14 14" style="position:absolute;left:3px;top:2px"><rect x="4" y="2" width="6" height="3" fill="#a8a8a8"/><rect x="2" y="5" width="10" height="5" fill="#b0b0b0"/><rect x="4" y="9" width="6" height="3" fill="#d0d0d0"/></svg><span class="f" style="left:20px;--w:34"><u>印刷</u><i>(P)...</i></span><span class="f k" style="left:168px;--w:24">Ctrl+P</span></div>
<div class="sep" style="top:312px"></div>
<div class="it" style="top:319px"><svg class="ic" width="14" height="14" viewBox="0 0 14 14" style="position:absolute;left:3px;top:2px"><rect x="5" y="1.5" width="7.5" height="6.5" fill="#c0c0c0"/><rect x="2" y="4.5" width="7" height="7.5" fill="#474747" stroke="#b8b8b8" stroke-width="1.2"/></svg><span class="f" style="left:20px;--w:74"><u>画像の場所をコピー</u><i>(I)</i></span></div>
<div class="it" style="top:337px"><svg class="ic" width="14" height="14" viewBox="0 0 14 14" style="position:absolute;left:3px;top:2px"><rect x="2.5" y="1.5" width="9" height="10.5" fill="none" stroke="#aaa" stroke-width="1.2"/><circle cx="7" cy="5.5" r="1.5" fill="#999"/><path d="M4.5 9.5 H9.5" stroke="#999"/></svg><span class="f" style="left:20px;--w:94"><u>ファイルマネージャーで開く</u><i>(F)</i></span><span class="f k" style="left:153px;--w:39">Ctrl+Alt+F</span></div>
<div class="sep" style="top:360px"></div>
<div class="it" style="top:367px"><svg class="ic" width="14" height="14" viewBox="0 0 14 14" style="position:absolute;left:3px;top:2px"><path d="M2.5 2.5 L11.5 11.5 M11.5 2.5 L2.5 11.5" stroke="#cfcfcf" stroke-width="1.8"/></svg><span class="f" style="left:20px;--w:56"><u>ビューを閉じる</u><i>(C)</i></span><span class="f k" style="left:165px;--w:27">Ctrl+W</span></div>
<div class="it" style="top:385px"><svg class="ic" width="14" height="14" viewBox="0 0 14 14" style="position:absolute;left:3px;top:2px"><path d="M1 1 L4.5 4.5 M4.5 1 L1 4.5" stroke="#c8c8c8" stroke-width="1"/><rect x="4" y="5" width="6" height="5" fill="#9a9a9a"/><rect x="6" y="7" width="6.5" height="5.5" fill="#c0c0c0"/></svg><span class="f" style="left:20px;--w:52"><u>すべて閉じる</u><i>(L)</i></span><span class="f k" style="left:143px;--w:49">Shift+Ctrl+W</span></div>
<div class="it" style="top:403px"><svg class="ic" width="14" height="14" viewBox="0 0 14 14" style="position:absolute;left:3px;top:2px"><path d="M1.5 7 L6 3.5 V10.5 Z" fill="#e02828"/><rect x="5" y="5.5" width="3" height="3" fill="#e02828"/><rect x="9" y="2.5" width="1.5" height="10" fill="#50a050"/><rect x="11" y="2.5" width="1.5" height="10" fill="#bbb"/></svg><span class="f" style="left:20px;--w:29"><u>終了</u><i>(Q)</i></span><span class="f k" style="left:167px;--w:25">Ctrl+Q</span></div>
</div>
<script>
(function(){
var els=document.querySelectorAll('.f');
for(var i=0;i<els.length;i++){
 var e=els[i];var w=parseFloat(getComputedStyle(e).getPropertyValue('--w'));
 var nw=e.getBoundingClientRect().width;
 if(w&&nw){e.style.transform='scaleX('+(w/nw)+')';}
}
})();
</script>
</body></html>
